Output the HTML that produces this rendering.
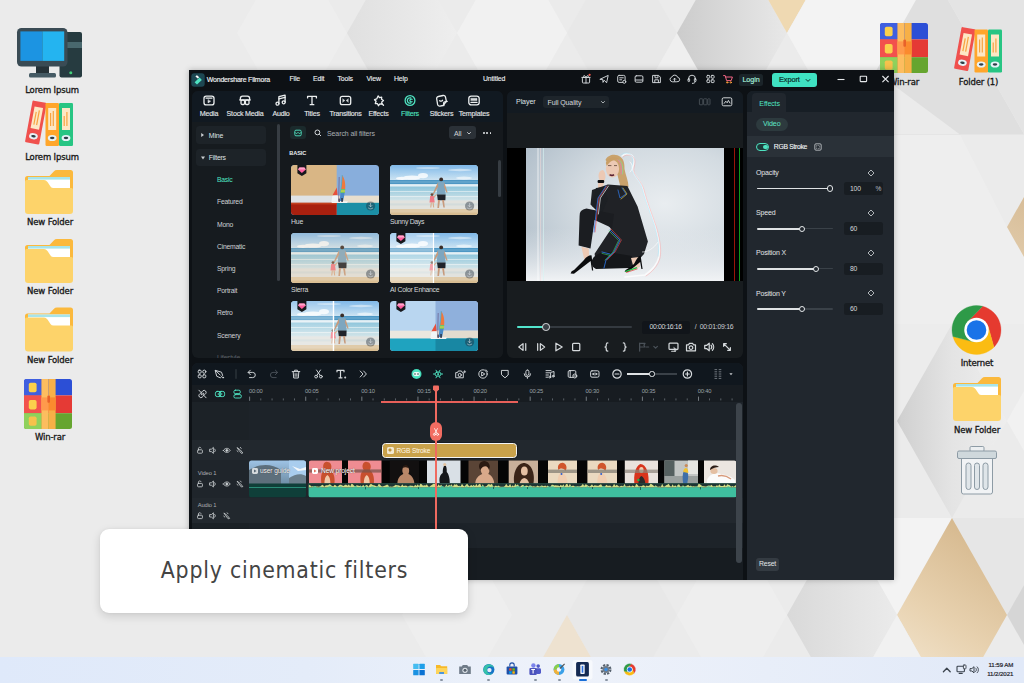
<!DOCTYPE html>
<html lang="en">
<head>
<meta charset="utf-8">
<title>Apply cinematic filters</title>
<style>
*{box-sizing:border-box;margin:0;padding:0}
html,body{width:1024px;height:683px;overflow:hidden;background:#ebebeb}
body{font-family:"Liberation Sans","DejaVu Sans",sans-serif;position:relative}
#stage{position:absolute;left:0;top:0;width:1024px;height:683px;overflow:hidden}
.abs{position:absolute}
.t{position:absolute;white-space:nowrap;line-height:1;color:#d9dde0;font-size:7px;letter-spacing:-0.1px}
.lbl{position:absolute;white-space:nowrap;line-height:1;color:#161616;font-family:"DejaVu Sans","Liberation Sans",sans-serif;font-size:8.5px;font-weight:normal;transform:translateX(-50%);-webkit-text-stroke:0.3px #161616;letter-spacing:-0.15px}
svg{position:absolute;overflow:visible}
.ic{stroke:#d5d9dc;fill:none;stroke-width:1.1;stroke-linecap:round;stroke-linejoin:round}
.teal{color:#4fe3c1}
</style>
</head>
<body>
<div id="stage">
<svg id="bg" width="1024" height="683" viewBox="0 0 1024 683" style="position:absolute;left:0;top:0">
<defs>
<linearGradient id="gd" x1="0" x2="1" y1="0" y2="0"><stop offset="0" stop-color="#cccccc"/><stop offset="1" stop-color="#e8e8e8"/></linearGradient>
<linearGradient id="gd3" x1="0" x2="1" y1="0" y2="0"><stop offset="0" stop-color="#cfcfcf"/><stop offset="0.5" stop-color="#e4e4e4"/><stop offset="1" stop-color="#eeeeee"/></linearGradient>
<linearGradient id="gd2" x1="0" x2="1" y1="0" y2="0"><stop offset="0" stop-color="#d9d9d9"/><stop offset="1" stop-color="#ebebeb"/></linearGradient>
<linearGradient id="gold" x1="0.65" x2="0.3" y1="0.05" y2="0.95"><stop offset="0" stop-color="#d6b98f"/><stop offset="0.55" stop-color="#e8d2b0"/><stop offset="1" stop-color="#f3e6d0"/></linearGradient>
<linearGradient id="gold2" x1="0.3" x2="0" y1="0" y2="1"><stop offset="0" stop-color="#cdae84"/><stop offset="1" stop-color="#ead8bc"/></linearGradient>
<linearGradient id="gl" x1="0" x2="1" y1="0" y2="0"><stop offset="0" stop-color="#e0e0e0"/><stop offset="1" stop-color="#eeeeee"/></linearGradient>
</defs>
<rect width="1024" height="683" fill="#ebebeb"/>
<polygon points="237,33 292,-64 347,33 292,130" fill="#eeeeee" />
<polygon points="347,33 402,-64 457,33 402,130" fill="url(#gl)" />
<polygon points="457,33 512,-64 567,33 512,130" fill="#f1f1f1" />
<polygon points="567,33 622,-64 677,33 622,130" fill="#e8e8e8" />
<polygon points="677,33 622,130 732,130" fill="#efefef"/>
<polygon points="677,33 732,-64 787,33 732,130" fill="url(#gd)" />
<polygon points="787,33 732,-64 842,-64" fill="#efd9b2"/>
<polygon points="787,33 842,-64 897,33 842,130" fill="#f3f3f3" />
<polygon points="842,0 916,0 840,135 820,135" fill="#f3f3f3"/>
<polygon points="916,0 948,0 1024,134 1024,135 840,135" fill="#dfdfdf"/>
<polygon points="948,0 1024,0 1024,134" fill="#e4e4e4"/>
<polygon points="880,75 960,134.5 880,134.5" fill="#ebebeb"/>
<rect x="880" y="135" width="144" height="189" fill="#eeeeee"/>
<polygon points="960,134.5 1024,134.5 1024,200 1007,227" fill="#ebebeb"/>
<polygon points="1007,227 1062,130 1117,227 1062,324" fill="url(#gold2)" />
<polygon points="893,324 1024,324 1024,421 893,421" fill="#ececec"/>
<polygon points="897,421 952,324 1007,421 952,518" fill="url(#gd3)" />
<polygon points="1007,421 1062,324 1117,421 1062,518" fill="#f1f1f1" />
<polygon points="842,518 952,518 897,615" fill="#f3f3f3"/>
<polygon points="952,518 1062,518 1007,615" fill="#e6e6e6"/>
<polygon points="897,615 952,518 1007,615 952,712" fill="url(#gold)" />
<polygon points="1007,615 1062,518 1117,615 1062,712" fill="#d6d6d6" />
<polygon points="787,615 842,518 897,615 842,712" fill="url(#gd2)" />
<polygon points="897,615 842,712 952,712" fill="#f1f1f1"/>
<polygon points="677,615 732,518 787,615 732,712" fill="#eeeeee" />
<polygon points="567,615 622,518 677,615 622,712" fill="#e8e8e8" />
<polygon points="567,615 512,712 622,712" fill="#eee2d0"/>
<polygon points="402,615 457,518 512,615 457,712" fill="#eeeeee" />
</svg>
<svg width="1024" height="683" viewBox="0 0 1024 683" style="left:0;top:0"><g transform="translate(17,28)"><rect x="42.5" y="4" width="22.5" height="45.5" rx="2" fill="#263b40"/><rect x="42.5" y="14" width="22.5" height="6" fill="#49686e"/><circle cx="53.8" cy="44.8" r="1.5" fill="#43d17a"/><rect x="19" y="36" width="13" height="10" fill="#263238"/><rect x="12" y="45" width="27" height="4.5" rx="1.5" fill="#455a64"/><rect x="0" y="0" width="50.5" height="38.5" rx="4.5" fill="#3a4b54"/><rect x="3.4" y="3.4" width="22" height="29.5" fill="#1c94e2"/><rect x="25.4" y="3.4" width="21.8" height="29.5" fill="#24b4f0"/></g><g transform="translate(25,101)"><g transform="rotate(10.5 11 22)"><rect x="3.6" y="0.4" width="14.4" height="42.4" rx="1.2" fill="#f0504d"/><rect x="6.6" y="6" width="8.6" height="22" fill="#fde7c5"/><rect x="8.6" y="11" width="1.2" height="13" fill="#f7a440"/><rect x="11.4" y="9" width="1.2" height="15" fill="#f7a440"/><ellipse cx="10.9" cy="35.5" rx="4.4" ry="3.1" fill="#e6f2f7"/><ellipse cx="10.9" cy="35.5" rx="2.3" ry="1.15" fill="#2f3e46"/></g><rect x="20.5" y="2" width="13.5" height="43" rx="1.2" fill="#ffa62b"/><rect x="23.2" y="7" width="8" height="22" fill="#fde7c5"/><rect x="25" y="12" width="1.2" height="13" fill="#f7a440"/><rect x="27.7" y="10" width="1.2" height="15" fill="#f7a440"/><ellipse cx="27.2" cy="37" rx="4.4" ry="3.1" fill="#e6f2f7"/><ellipse cx="27.2" cy="37" rx="2.3" ry="1.15" fill="#2f3e46"/><rect x="34" y="2" width="14" height="43" rx="1.2" fill="#27c583"/><rect x="37" y="7" width="8" height="22" fill="#fde7c5"/><rect x="38.6" y="15" width="1.2" height="10" fill="#f7a440"/><rect x="41.3" y="11" width="1.2" height="14" fill="#f7a440"/><ellipse cx="41" cy="37" rx="4.4" ry="3.1" fill="#e6f2f7"/><ellipse cx="41" cy="37" rx="2.3" ry="1.15" fill="#2f3e46"/></g><g transform="translate(25,170)"><path d="M2.5,6 H24.5 L29,1.2 Q30,0 32,0 H45.5 Q48,0 48,2.5 V40 H0 V8.5 Q0,6 2.5,6 Z" fill="#fbb93d"/><rect x="3" y="7" width="42" height="12" fill="#ffffff"/><rect x="3" y="7" width="42" height="2.6" fill="#a8e4ea"/><path d="M0,11.5 Q0,10 1.5,10 H19 Q21,10 22.5,12 L25.5,16.5 Q26.5,18 28.5,18 H46.5 Q48,18 48,19.5 V41 Q48,44 45,44 H3 Q0,44 0,41 Z" fill="#fdd36a"/></g><g transform="translate(25,239)"><path d="M2.5,6 H24.5 L29,1.2 Q30,0 32,0 H45.5 Q48,0 48,2.5 V40 H0 V8.5 Q0,6 2.5,6 Z" fill="#fbb93d"/><rect x="3" y="7" width="42" height="12" fill="#ffffff"/><rect x="3" y="7" width="42" height="2.6" fill="#a8e4ea"/><path d="M0,11.5 Q0,10 1.5,10 H19 Q21,10 22.5,12 L25.5,16.5 Q26.5,18 28.5,18 H46.5 Q48,18 48,19.5 V41 Q48,44 45,44 H3 Q0,44 0,41 Z" fill="#fdd36a"/></g><g transform="translate(25,307.5)"><path d="M2.5,6 H24.5 L29,1.2 Q30,0 32,0 H45.5 Q48,0 48,2.5 V40 H0 V8.5 Q0,6 2.5,6 Z" fill="#fbb93d"/><rect x="3" y="7" width="42" height="12" fill="#ffffff"/><rect x="3" y="7" width="42" height="2.6" fill="#a8e4ea"/><path d="M0,11.5 Q0,10 1.5,10 H19 Q21,10 22.5,12 L25.5,16.5 Q26.5,18 28.5,18 H46.5 Q48,18 48,19.5 V41 Q48,44 45,44 H3 Q0,44 0,41 Z" fill="#fdd36a"/></g><g transform="translate(24,379)"><clipPath id="wr24"><rect x="0" y="0" width="48" height="50" rx="2.5"/></clipPath><g clip-path="url(#wr24)"><rect x="0" y="0" width="48" height="16.4" fill="#2c4fd6"/><rect x="0" y="16.4" width="48" height="17.8" fill="#e53a35"/><rect x="0" y="34.2" width="48" height="15.8" fill="#66a52f"/><rect x="0" y="0" width="17.4" height="16.4" fill="#3f5fe0"/><rect x="0" y="16.4" width="17.4" height="17.8" fill="#f2514d"/><rect x="0" y="34.2" width="17.4" height="15.8" fill="#8fd15c"/><rect x="17.4" y="0" width="7.2" height="50" fill="#fdbd5f"/><rect x="24.6" y="0" width="7" height="50" fill="#f7b047"/><rect x="17.4" y="18.4" width="7.2" height="13" fill="#ff9a4c"/><rect x="24.6" y="18.4" width="7" height="13" fill="#fb8a2e"/><rect x="23.4" y="16.4" width="2.6" height="7.4" rx="1" fill="#e8622a"/><rect x="4.8" y="3.8" width="7.8" height="9.4" rx="1.8" fill="#fbd04c"/><rect x="4.8" y="21" width="7.8" height="9.4" rx="1.8" fill="#fbd04c"/><rect x="4.8" y="37.4" width="7.8" height="9.4" rx="1.8" fill="#f6c24c"/></g></g><g transform="translate(880,23)"><clipPath id="wr880"><rect x="0" y="0" width="48" height="50" rx="2.5"/></clipPath><g clip-path="url(#wr880)"><rect x="0" y="0" width="48" height="16.4" fill="#2c4fd6"/><rect x="0" y="16.4" width="48" height="17.8" fill="#e53a35"/><rect x="0" y="34.2" width="48" height="15.8" fill="#66a52f"/><rect x="0" y="0" width="17.4" height="16.4" fill="#3f5fe0"/><rect x="0" y="16.4" width="17.4" height="17.8" fill="#f2514d"/><rect x="0" y="34.2" width="17.4" height="15.8" fill="#8fd15c"/><rect x="17.4" y="0" width="7.2" height="50" fill="#fdbd5f"/><rect x="24.6" y="0" width="7" height="50" fill="#f7b047"/><rect x="17.4" y="18.4" width="7.2" height="13" fill="#ff9a4c"/><rect x="24.6" y="18.4" width="7" height="13" fill="#fb8a2e"/><rect x="23.4" y="16.4" width="2.6" height="7.4" rx="1" fill="#e8622a"/><rect x="4.8" y="3.8" width="7.8" height="9.4" rx="1.8" fill="#fbd04c"/><rect x="4.8" y="21" width="7.8" height="9.4" rx="1.8" fill="#fbd04c"/><rect x="4.8" y="37.4" width="7.8" height="9.4" rx="1.8" fill="#f6c24c"/></g></g><g transform="translate(954,27.5)"><g transform="rotate(10.5 11 22)"><rect x="3.6" y="0.4" width="14.4" height="42.4" rx="1.2" fill="#f0504d"/><rect x="6.6" y="6" width="8.6" height="22" fill="#fde7c5"/><rect x="8.6" y="11" width="1.2" height="13" fill="#f7a440"/><rect x="11.4" y="9" width="1.2" height="15" fill="#f7a440"/><ellipse cx="10.9" cy="35.5" rx="4.4" ry="3.1" fill="#e6f2f7"/><ellipse cx="10.9" cy="35.5" rx="2.3" ry="1.15" fill="#2f3e46"/></g><rect x="20.5" y="2" width="13.5" height="43" rx="1.2" fill="#ffa62b"/><rect x="23.2" y="7" width="8" height="22" fill="#fde7c5"/><rect x="25" y="12" width="1.2" height="13" fill="#f7a440"/><rect x="27.7" y="10" width="1.2" height="15" fill="#f7a440"/><ellipse cx="27.2" cy="37" rx="4.4" ry="3.1" fill="#e6f2f7"/><ellipse cx="27.2" cy="37" rx="2.3" ry="1.15" fill="#2f3e46"/><rect x="34" y="2" width="14" height="43" rx="1.2" fill="#27c583"/><rect x="37" y="7" width="8" height="22" fill="#fde7c5"/><rect x="38.6" y="15" width="1.2" height="10" fill="#f7a440"/><rect x="41.3" y="11" width="1.2" height="14" fill="#f7a440"/><ellipse cx="41" cy="37" rx="4.4" ry="3.1" fill="#e6f2f7"/><ellipse cx="41" cy="37" rx="2.3" ry="1.15" fill="#2f3e46"/></g><path d="M967.76,321.41 L982.63,306.28 A24.5,24.5 0 0 1 993.97,347.17 L988.30,326.73 L976.5,330 Z" fill="#e53a2f" stroke="#e53a2f" stroke-width="0.3"/><path d="M988.30,326.73 L993.97,347.17 A24.5,24.5 0 0 1 952.89,336.55 L973.43,341.86 L976.5,330 Z" fill="#fbbc12" stroke="#fbbc12" stroke-width="0.3"/><path d="M973.43,341.86 L952.89,336.55 A24.5,24.5 0 0 1 982.63,306.28 L967.76,321.41 L976.5,330 Z" fill="#2e9a48" stroke="#2e9a48" stroke-width="0.3"/><circle cx="976.5" cy="330" r="12.25" fill="#ffffff"/><circle cx="976.5" cy="330" r="9.80" fill="#1a73e8"/><g transform="translate(953,377)"><path d="M2.5,6 H24.5 L29,1.2 Q30,0 32,0 H45.5 Q48,0 48,2.5 V40 H0 V8.5 Q0,6 2.5,6 Z" fill="#fbb93d"/><rect x="3" y="7" width="42" height="12" fill="#ffffff"/><rect x="3" y="7" width="42" height="2.6" fill="#a8e4ea"/><path d="M0,11.5 Q0,10 1.5,10 H19 Q21,10 22.5,12 L25.5,16.5 Q26.5,18 28.5,18 H46.5 Q48,18 48,19.5 V41 Q48,44 45,44 H3 Q0,44 0,41 Z" fill="#fdd36a"/></g><g transform="translate(957,446)" stroke="#8d9ba5" stroke-width="1" ><rect x="13" y="0.5" width="14" height="5" rx="1.2" fill="#eceff1"/><rect x="4.5" y="11" width="31" height="37" rx="2" fill="#f1f3f5"/><rect x="0.5" y="5" width="39" height="7.5" rx="1.5" fill="#cfd8dc"/><rect x="9" y="17" width="5" height="26.5" rx="2.5" fill="#dfe5e9"/><rect x="17.5" y="17" width="5" height="26.5" rx="2.5" fill="#dfe5e9"/><rect x="26" y="17" width="5" height="26.5" rx="2.5" fill="#dfe5e9"/></g></svg>
<div class="lbl" style="left:52px;top:86.2px">Lorem Ipsum</div>
<div class="lbl" style="left:52px;top:153.2px">Lorem Ipsum</div>
<div class="lbl" style="left:50px;top:218.2px">New Folder</div>
<div class="lbl" style="left:50px;top:287.2px">New Folder</div>
<div class="lbl" style="left:50px;top:356.2px">New Folder</div>
<div class="lbl" style="left:50px;top:433.2px">Win-rar</div>
<div class="lbl" style="left:904px;top:78.2px">Win-rar</div>
<div class="lbl" style="left:978.5px;top:78.2px">Folder (1)</div>
<div class="lbl" style="left:977px;top:359.2px">Internet</div>
<div class="lbl" style="left:977px;top:426.2px">New Folder</div>
<div class="abs" style="left:189px;top:70px;width:705px;height:510px;background:#0d1115;box-shadow:0 0 6px rgba(0,0,0,.25)"></div>
<svg width="14" height="14" viewBox="0 0 14 14" style="left:191px;top:72.5px"><rect x="0.3" y="0.3" width="13.4" height="13.4" rx="3" fill="#1d4752"/><path d="M4.4,3.2 6,2.2 8.2,4.2 6.6,5.4Z" fill="#fff"/><path d="M8.6,4.6 10.8,7 6,11.6 3.6,9.2Z" fill="#4fe3c1"/></svg>
<div class="t" style="left:206.8px;top:76.4px;font-size:7px;color:#f0f2f3;letter-spacing:-0.21px;-webkit-text-stroke:0.15px #f0f2f3">Wondershare Filmora</div>
<div class="t" style="left:289.5px;top:76.4px;font-size:6.9px;color:#eceff0;letter-spacing:-0.15px;-webkit-text-stroke:0.12px #eceff0">File</div>
<div class="t" style="left:313px;top:76.4px;font-size:6.9px;color:#eceff0;letter-spacing:-0.15px;-webkit-text-stroke:0.12px #eceff0">Edit</div>
<div class="t" style="left:337.5px;top:76.4px;font-size:6.9px;color:#eceff0;letter-spacing:-0.15px;-webkit-text-stroke:0.12px #eceff0">Tools</div>
<div class="t" style="left:366.5px;top:76.4px;font-size:6.9px;color:#eceff0;letter-spacing:-0.15px;-webkit-text-stroke:0.12px #eceff0">View</div>
<div class="t" style="left:394px;top:76.4px;font-size:6.9px;color:#eceff0;letter-spacing:-0.15px;-webkit-text-stroke:0.12px #eceff0">Help</div>
<div class="t" style="left:483px;top:76.4px;font-size:6.9px;color:#eceff0;letter-spacing:-0.15px;-webkit-text-stroke:0.12px #eceff0">Untitled</div>
<svg class="ic" width="1024" height="683" viewBox="0 0 1024 683" style="left:0;top:0;stroke-width:0.95"><g transform="translate(586,79)"><rect x="-3.6" y="-1.6" width="7.2" height="5.6" rx="0.8"/><path d="M-4.2,-1.6h8.4M0,-1.6v5.6M0,-1.8c-1.5,-3 -3.6,-1.4 -1.8,0M0,-1.8c1.5,-3 3.6,-1.4 1.8,0"/><circle cx="3.6" cy="-4.2" r="1.1" fill="#ff5a4f" stroke="none"/></g><g transform="translate(604.2,79)"><path d="M-4,0.2 4,-3.6 2.4,3.8 0,1.2 -1.2,3.4 -1.4,0.8Z"/></g><g transform="translate(621.5,79)"><rect x="-3.8" y="-3.6" width="7.4" height="7" rx="1.4"/><path d="M-1.8,-1.2h3.6M-1.8,0.8h2"/><circle cx="2.8" cy="2.8" r="1.5" fill="#0d1115"/></g><g transform="translate(639,79)"><rect x="-3.9" y="-3.2" width="7.8" height="6.4" rx="1.2"/><path d="M-3.6,1h7.2"/></g><g transform="translate(656.6,79)"><path d="M-3.6,-3.6h5.6l1.8,1.8v5.4h-7.4Z"/><path d="M-1.6,-3.4v2.2h3v-2M-1.8,3.4v-2.6h3.6v2.6"/></g><g transform="translate(674.6,79)"><path d="M-2.4,2.8a2.4,2.4 0 0 1 -0.4,-4.7a3.1,3.1 0 0 1 5.9,0.3a2.2,2.2 0 0 1 -0.5,4.4Z"/><path d="M0,2v-2.6M-1.1,0.3l1.1,-1.1 1.1,1.1"/></g><g transform="translate(692,79)"><path d="M-3.4,0.8v-1.2a3.4,3.4 0 0 1 6.8,0v1.2"/><rect x="-4" y="-0.4" width="1.6" height="3" rx="0.7"/><rect x="2.4" y="-0.4" width="1.6" height="3" rx="0.7"/><path d="M3.2,2.6c0,1.4 -1.4,1.8 -2.8,1.8"/></g><g transform="translate(710.5,79)"><rect x="-3.6" y="-3.6" width="2.8" height="2.8" rx="0.7"/><rect x="0.8" y="-3.6" width="2.8" height="2.8" rx="0.7"/><rect x="-3.6" y="0.8" width="2.8" height="2.8" rx="0.7"/><rect x="0.8" y="0.8" width="2.8" height="2.8" rx="0.7"/></g><g transform="translate(728,79)" stroke="#ff5fa0"><path d="M-4.4,-3.4h1.6l1.4,5h4.6l1.2,-3.6h-6.6" stroke="#ff6a8a"/><circle cx="-0.8" cy="3.4" r="0.7" stroke="#ffa03c"/><circle cx="2.8" cy="3.4" r="0.7" stroke="#ffa03c"/></g></svg>
<div class="abs" style="left:739px;top:73.5px;width:24px;height:12.5px;background:#1b2429;border-radius:2.5px"></div>
<div class="t" style="left:751px;top:76.4px;transform:translateX(-50%);font-size:7.2px;color:#a6f0de;-webkit-text-stroke:0.15px #a6f0de">Login</div>
<div class="abs" style="left:772px;top:73px;width:45px;height:13.5px;background:#3fe2c2;border-radius:3px"></div>
<div class="t" style="left:779px;top:76.2px;font-size:7.4px;color:#0c2b27;-webkit-text-stroke:0.2px #0c2b27">Export</div>
<svg width="10" height="10" viewBox="-5 -5 10 10" style="left:803px;top:74.5px" fill="none" stroke="#0c2b27" stroke-width="1"><path d="M-2.2,-0.8 0,1.4 2.2,-0.8"/></svg>
<svg width="60" height="14" viewBox="0 0 60 14" style="left:834px;top:72px" fill="none" stroke="#e6e9eb" stroke-width="1.1"><path d="M3.5,7.5h7"/><rect x="26.2" y="4.2" width="6.4" height="5.4" rx="0.6"/><path d="M48.4,4 54.6,10.2M54.6,4 48.4,10.2"/></svg>
<div class="abs" style="left:192px;top:91px;width:311px;height:267px;background:#161b1f;border-radius:6px;overflow:hidden"><div class="abs" style="left:0;top:0;width:311px;height:30.5px;background:#111921"></div><div class="abs" style="left:88px;top:30.5px;width:223px;height:240px;background:#15191d"></div></div>
<div class="t" style="left:209px;top:110.7px;transform:translateX(-50%);font-size:7.1px;color:#e4e7e9;letter-spacing:-0.2px;-webkit-text-stroke:0.12px #e4e7e9">Media</div>
<div class="t" style="left:245px;top:110.7px;transform:translateX(-50%);font-size:7.1px;color:#e4e7e9;letter-spacing:-0.2px;-webkit-text-stroke:0.12px #e4e7e9">Stock Media</div>
<div class="t" style="left:281px;top:110.7px;transform:translateX(-50%);font-size:7.1px;color:#e4e7e9;letter-spacing:-0.2px;-webkit-text-stroke:0.12px #e4e7e9">Audio</div>
<div class="t" style="left:312px;top:110.7px;transform:translateX(-50%);font-size:7.1px;color:#e4e7e9;letter-spacing:-0.2px;-webkit-text-stroke:0.12px #e4e7e9">Titles</div>
<div class="t" style="left:345.5px;top:110.7px;transform:translateX(-50%);font-size:7.1px;color:#e4e7e9;letter-spacing:-0.2px;-webkit-text-stroke:0.12px #e4e7e9">Transitions</div>
<div class="t" style="left:378.5px;top:110.7px;transform:translateX(-50%);font-size:7.1px;color:#e4e7e9;letter-spacing:-0.2px;-webkit-text-stroke:0.12px #e4e7e9">Effects</div>
<div class="t" style="left:410px;top:110.7px;transform:translateX(-50%);font-size:7.1px;color:#4fe3c1;letter-spacing:-0.2px;-webkit-text-stroke:0.12px #4fe3c1">Filters</div>
<div class="t" style="left:441.5px;top:110.7px;transform:translateX(-50%);font-size:7.1px;color:#e4e7e9;letter-spacing:-0.2px;-webkit-text-stroke:0.12px #e4e7e9">Stickers</div>
<div class="t" style="left:474px;top:110.7px;transform:translateX(-50%);font-size:7.1px;color:#e4e7e9;letter-spacing:-0.2px;-webkit-text-stroke:0.12px #e4e7e9">Templates</div>
<svg class="ic" width="1024" height="683" viewBox="0 0 1024 683" style="left:0;top:0;stroke-width:1.3;stroke:#eceff0"><g transform="translate(209,100.5)"><rect x="-5" y="-4.4" width="10" height="8.8" rx="2.2"/><path d="M-3,-2.4h6"/><path d="M-1,-0.6v3l2.4,-1.5Z" fill="#d5d9dc" stroke-width="0.5"/></g><g transform="translate(245,100.5)"><path d="M-4.6,-0.4v-1.8a2.2,2.2 0 0 1 2.2,-2.2h4.8a2.2,2.2 0 0 1 2.2,2.2v1.8"/><path d="M-5.2,-0.6h10.4"/><rect x="-4" y="-0.4" width="3.6" height="4.4" rx="1.3"/><rect x="0.4" y="-0.4" width="3.6" height="4.4" rx="1.3"/></g><g transform="translate(281.3,100.3)"><path d="M-2.4,3.4v-7l6.2,-1.6v7"/><path d="M-2.4,-1.4 3.8,-3"/><circle cx="-3.8" cy="3.4" r="1.5"/><circle cx="2.4" cy="2" r="1.5"/></g><g transform="translate(312,100.5)" stroke-width="1.3"><path d="M-4.4,-2.6v-1.6h8.8v1.6M0,-4.2v8.4M-1.8,4.2h3.6"/></g><g transform="translate(345.5,100.5)"><rect x="-5.2" y="-4.2" width="10.4" height="8.4" rx="2"/><path d="M-2.6,-1.6 -0.6,0 -2.6,1.6Z M2.6,-1.6 0.6,0 2.6,1.6Z" fill="#d5d9dc" stroke-width="0.4"/></g><g transform="translate(378.5,100.5)"><path d="M-0.4,-4.6l1.4,1.8 2.2,-0.6 -0.2,2.2 2,1.2 -1.8,1.4 0.4,2.2 -2.2,-0.2 -1.4,1.8 -1,-2 -2.2,-0.2 0.8,-2.2 -1.6,-1.6 2.2,-0.8Z"/><path d="M3.4,3.2l1.6,1.6"/></g><g transform="translate(410,100.5)" stroke="#4fe3c1"><circle r="4.9"/><path d="M0.8,-2.6a2.7,2.7 0 1 0 0,5.2M2,-1.2a1.4,1.4 0 1 0 0,2.4"/></g><g transform="translate(441.5,100.5)"><path d="M-4.8,-1.6a2,2 0 0 1 1.6,-2.4l4.8,-1a2,2 0 0 1 2.4,1.6l0.9,4.2 -3.4,4.2 -3,0.6a2,2 0 0 1 -2.4,-1.6Z"/><path d="M5.7,0.8l-2.4,0.5a1.4,1.4 0 0 0 -1.1,1.7l0.2,2"/><path d="M-1.8,0.2a1.8,1.8 0 0 0 2.8,-0.4"/></g><g transform="translate(474,100.5)"><rect x="-5.2" y="-4.4" width="10.4" height="8.8" rx="2.4"/><rect x="-3" y="-2.2" width="6" height="2.2" fill="#d5d9dc" stroke-width="0.4"/><path d="M-3,1.9h6"/></g></svg>
<div class="abs" style="left:196px;top:126px;width:70px;height:18px;background:#1d2328;border-radius:3.5px"></div>
<div class="abs" style="left:196px;top:148.5px;width:70px;height:17.5px;background:#1d2328;border-radius:3.5px"></div>
<svg width="6" height="6" viewBox="0 0 6 6" style="left:199.5px;top:132px"><path d="M1.2,1 4,3 1.2,5Z" fill="#c9cdd0"/></svg>
<svg width="6" height="6" viewBox="0 0 6 6" style="left:199.5px;top:154.5px"><path d="M1,1.6 5,1.6 3,4.4Z" fill="#c9cdd0"/></svg>
<div class="t" style="left:208.8px;top:133.1px;font-size:6.9px;color:#dfe2e4">Mine</div>
<div class="t" style="left:208.8px;top:155.3px;font-size:6.9px;color:#dfe2e4;letter-spacing:-0.25px">Filters</div>
<div class="t" style="left:217px;top:177.1px;font-size:6.8px;color:#4fe3c1;letter-spacing:-0.22px">Basic</div>
<div class="t" style="left:217px;top:199.29999999999998px;font-size:6.8px;color:#cdd1d4;letter-spacing:-0.22px">Featured</div>
<div class="t" style="left:217px;top:221.5px;font-size:6.8px;color:#cdd1d4;letter-spacing:-0.22px">Mono</div>
<div class="t" style="left:217px;top:243.7px;font-size:6.8px;color:#cdd1d4;letter-spacing:-0.22px">Cinematic</div>
<div class="t" style="left:217px;top:265.90000000000003px;font-size:6.8px;color:#cdd1d4;letter-spacing:-0.22px">Spring</div>
<div class="t" style="left:217px;top:288.1px;font-size:6.8px;color:#cdd1d4;letter-spacing:-0.22px">Portrait</div>
<div class="t" style="left:217px;top:310.3px;font-size:6.8px;color:#cdd1d4;letter-spacing:-0.22px">Retro</div>
<div class="t" style="left:217px;top:332.5px;font-size:6.8px;color:#cdd1d4;letter-spacing:-0.22px">Scenery</div>
<div class="t" style="left:217px;top:354.70000000000005px;font-size:6.8px;color:#5a6065;letter-spacing:-0.22px">Lifestyle</div>
<div class="abs" style="left:276.5px;top:124px;width:3.2px;height:157px;background:#373d43;border-radius:2px"></div>
<div class="abs" style="left:192px;top:358px;width:311px;height:5px;background:#0d1115;"></div>
<div class="abs" style="left:290px;top:126px;width:16px;height:13.3px;background:#1b2a2c;border-radius:3px"></div>
<svg width="10" height="10" viewBox="-5 -5 10 10" style="left:293px;top:127.6px" fill="none" stroke="#4fe3c1" stroke-width="0.9"><rect x="-3.2" y="-2.8" width="6.4" height="5.6" rx="1.2"/><path d="M-3,-0.6c1,1.4 2,1.4 3,0c1,1.4 2,1.4 3,0"/></svg>
<svg width="10" height="10" viewBox="-5 -5 10 10" style="left:312.8px;top:127.8px" fill="none" stroke="#d5d9dc" stroke-width="1"><circle cx="-0.6" cy="-0.6" r="2.4"/><path d="M1.2,1.2 3,3"/></svg>
<div class="t" style="left:327px;top:130.1px;font-size:7px;color:#a9afb4;letter-spacing:-0.1px">Search all filters</div>
<div class="abs" style="left:448.5px;top:126.3px;width:27.5px;height:13px;background:#2b3137;border-radius:3px"></div>
<div class="t" style="left:454px;top:130px;font-size:7px;color:#d0d4d7">All</div>
<svg width="8" height="8" viewBox="-4 -4 8 8" style="left:465px;top:128.8px" fill="none" stroke="#d0d4d7" stroke-width="0.9"><path d="M-1.8,-0.8 0,1 1.8,-0.8"/></svg>
<div class="abs" style="left:483.2px;top:132.2px;width:1.6px;height:1.6px;background:#e6e9eb;border-radius:1px"></div>
<div class="abs" style="left:486.4px;top:132.2px;width:1.6px;height:1.6px;background:#e6e9eb;border-radius:1px"></div>
<div class="abs" style="left:489.59999999999997px;top:132.2px;width:1.6px;height:1.6px;background:#e6e9eb;border-radius:1px"></div>
<div class="t" style="left:289.3px;top:151.3px;font-size:5.6px;font-weight:bold;color:#e9ecee;letter-spacing:-0.1px">BASIC</div>
<div class="abs" style="left:497.5px;top:160px;width:3.6px;height:37px;background:#373d43;border-radius:2px"></div>
<div class="t" style="left:291px;top:219.2px;font-size:6.9px;color:#d5d9dc;letter-spacing:-0.2px">Hue</div>
<div class="t" style="left:390px;top:219.2px;font-size:6.9px;color:#d5d9dc;letter-spacing:-0.3px">Sunny Days</div>
<div class="t" style="left:291px;top:287px;font-size:6.9px;color:#d5d9dc;letter-spacing:-0.2px">Sierra</div>
<div class="t" style="left:390px;top:287px;font-size:6.9px;color:#d5d9dc;letter-spacing:-0.3px">AI Color Enhance</div>
<svg width="1024" height="683" viewBox="0 0 1024 683" style="left:0;top:0"><defs><linearGradient id="sky" x1="0" x2="0" y1="0" y2="1"><stop offset="0" stop-color="#7fb8e8"/><stop offset="1" stop-color="#cfe5f3"/></linearGradient>
<linearGradient id="sea" x1="0" x2="0" y1="0" y2="1"><stop offset="0" stop-color="#8fc6dc"/><stop offset="1" stop-color="#d2e4e8"/></linearGradient>
<clipPath id="tc"><rect width="88" height="50" rx="3.5"/></clipPath></defs><g transform="translate(291,165)"><g clip-path="url(#tc)"><rect width="88" height="50" fill="#88aedc"/><rect x="45.7" y="30.6" width="43" height="7.4" fill="#e8decd"/><rect x="45.7" y="37.8" width="43" height="12.2" fill="#1b8fa6"/><rect width="45.7" height="31" fill="#d9b685"/><rect y="30.6" width="45.7" height="7.4" fill="#dfe3e6"/><rect y="37.8" width="45.7" height="12.2" fill="#a8200f"/><rect y="37.8" width="45.7" height="1.6" fill="#c2401f"/><g transform="translate(0,0)"><path d="M51.2,10 C54.6,15 54.9,22 53.6,28 L49.4,28 C50.4,22 50.9,16 51.2,10Z" fill="#f0783c"/><path d="M51.2,10 C50.9,16 50.4,22 49.4,28" fill="none" stroke="#3ab0d8" stroke-width="0.7"/><path d="M50,24 L54.3,24 L53.6,28 L49.4,28Z" fill="#6cc46a"/><path d="M50.1,25.4 L54.1,25.4 L53.9,26.6 L49.8,26.6Z" fill="#f2d63a"/><path d="M49.4,28 L53.6,28 C53.2,31 52.6,34 52,36.2 L48.6,36.2 C49,33 49.2,30 49.4,28Z" fill="#4a8ac8"/><path d="M45.8,22.6 L41.4,30.6 L46.6,30.2Z" fill="#e8503a"/><path d="M41.4,30.6 L46.6,30.2 L47.6,36.2 L40.6,36.2Z" fill="#f2f6f8" opacity=".92"/><path d="M48.2,12 L47.6,37" stroke="#5a3a6a" stroke-width="0.5" fill="none"/><path d="M40,36.2 L57,36.2 L56,38 L41,38Z" fill="#f4f4f4"/><rect x="50.4" y="33" width="1.3" height="4" fill="#2a2a36"/><rect x="47.6" y="33.6" width="1.1" height="3.4" fill="#3a2a3a"/></g><path d="M6.4,0h9v8.2l-4.5,2.8 -4.5,-2.8Z" fill="#17181c"/><path d="M8.4,2.6h5l1.4,1.8 -3.9,3.6 -3.9,-3.6Z" fill="#ff5fa0"/><path d="M8.4,2.6h5l1.4,1.8h-7.8Z" fill="#ffa6ca"/><circle cx="79.6" cy="41" r="4.6" fill="#1e2a3a" opacity=".42"/><path d="M79.6,38v3.8M78,40.2l1.6,1.6 1.6,-1.6M77.2,42.8c0.8,1.4 4,1.4 4.8,0" fill="none" stroke="#d5dbe0" stroke-width="0.7" opacity=".85"/></g></g><g transform="translate(390,165)"><g clip-path="url(#tc)"><rect width="88" height="50" fill="#cfe3e8"/><rect width="88" height="15.4" fill="url(#sky)"/><g fill="#ffffff" opacity=".8"><ellipse cx="22" cy="12.6" rx="9" ry="2.2"/><ellipse cx="33" cy="10.6" rx="5" ry="2.6"/><ellipse cx="12" cy="13.4" rx="6" ry="1.6"/><ellipse cx="70" cy="5" rx="12" ry="1.2" opacity=".6"/><ellipse cx="74" cy="13" rx="8" ry="1.4" opacity=".7"/><ellipse cx="38" cy="3" rx="12" ry="1" opacity=".5"/></g><rect y="15" width="88" height="4.4" fill="#4d97c4"/><rect y="16.6" width="88" height="0.8" fill="#7db6d6"/><rect y="19.2" width="88" height="2.4" fill="#e3eff5"/><rect y="21.6" width="88" height="14" fill="url(#sea)"/><rect y="26" width="88" height="1" fill="#e6f1f4" opacity=".7"/><rect y="31" width="88" height="1.2" fill="#eef4f5" opacity=".7"/><rect y="35.4" width="88" height="9" fill="#e1e2de"/><rect y="38.4" width="88" height="2" fill="#cfd9da" opacity=".8"/><rect y="44" width="88" height="6" fill="#dfcaa8"/><rect y="47.6" width="88" height="2.4" fill="#d8bd92"/><g transform="translate(51.2,0)"><circle cx="0" cy="14.4" r="1.9" fill="#3a2c26"/><path d="M-3.4,16.8h6.6l1.2,12.8h-8.8Z" fill="#7ea6bf"/><path d="M-4.2,29.4h8.6l-0.2,5.8h-7.6Z" fill="#20232a"/><path d="M-3.2,35l-0.6,8h1.6l1,-8Z M0.8,35l1.4,7.6h1.4l-0.8,-7.6Z" fill="#c79a7c"/><path d="M-3.4,17.6l-5,11 1,0.6 4.4,-7.6Z" fill="#c79a7c"/><path d="M3.2,17.4l3.2,10 -1,0.4 -2.6,-6Z" fill="#c79a7c"/></g><g transform="translate(42,0)"><circle cx="0" cy="29.6" r="1.4" fill="#6a4a38"/><path d="M-1.8,31h3.6l0.9,6.6h-5.2Z" fill="#f07a86"/><path d="M-1.2,37.4l-0.6,5h1.1l0.6,-5Z M0.4,37.4l0.8,5h1l-0.5,-5Z" fill="#d8ab8c"/><path d="M1.6,31.4l2.8,-2.4 0.5,0.6 -2.6,3.4Z" fill="#d8ab8c"/></g><circle cx="79.6" cy="41" r="4.6" fill="#1e2a3a" opacity=".42"/><path d="M79.6,38v3.8M78,40.2l1.6,1.6 1.6,-1.6M77.2,42.8c0.8,1.4 4,1.4 4.8,0" fill="none" stroke="#d5dbe0" stroke-width="0.7" opacity=".85"/></g></g><g transform="translate(291,233)"><g clip-path="url(#tc)"><rect width="88" height="50" fill="#cfe3e8"/><rect width="88" height="15.4" fill="url(#sky)"/><g fill="#ffffff" opacity=".8"><ellipse cx="22" cy="12.6" rx="9" ry="2.2"/><ellipse cx="33" cy="10.6" rx="5" ry="2.6"/><ellipse cx="12" cy="13.4" rx="6" ry="1.6"/><ellipse cx="70" cy="5" rx="12" ry="1.2" opacity=".6"/><ellipse cx="74" cy="13" rx="8" ry="1.4" opacity=".7"/><ellipse cx="38" cy="3" rx="12" ry="1" opacity=".5"/></g><rect y="15" width="88" height="4.4" fill="#4d97c4"/><rect y="16.6" width="88" height="0.8" fill="#7db6d6"/><rect y="19.2" width="88" height="2.4" fill="#e3eff5"/><rect y="21.6" width="88" height="14" fill="url(#sea)"/><rect y="26" width="88" height="1" fill="#e6f1f4" opacity=".7"/><rect y="31" width="88" height="1.2" fill="#eef4f5" opacity=".7"/><rect y="35.4" width="88" height="9" fill="#e1e2de"/><rect y="38.4" width="88" height="2" fill="#cfd9da" opacity=".8"/><rect y="44" width="88" height="6" fill="#dfcaa8"/><rect y="47.6" width="88" height="2.4" fill="#d8bd92"/><g transform="translate(51.2,0)"><circle cx="0" cy="14.4" r="1.9" fill="#3a2c26"/><path d="M-3.4,16.8h6.6l1.2,12.8h-8.8Z" fill="#7ea6bf"/><path d="M-4.2,29.4h8.6l-0.2,5.8h-7.6Z" fill="#20232a"/><path d="M-3.2,35l-0.6,8h1.6l1,-8Z M0.8,35l1.4,7.6h1.4l-0.8,-7.6Z" fill="#c79a7c"/><path d="M-3.4,17.6l-5,11 1,0.6 4.4,-7.6Z" fill="#c79a7c"/><path d="M3.2,17.4l3.2,10 -1,0.4 -2.6,-6Z" fill="#c79a7c"/></g><g transform="translate(42,0)"><circle cx="0" cy="29.6" r="1.4" fill="#6a4a38"/><path d="M-1.8,31h3.6l0.9,6.6h-5.2Z" fill="#f07a86"/><path d="M-1.2,37.4l-0.6,5h1.1l0.6,-5Z M0.4,37.4l0.8,5h1l-0.5,-5Z" fill="#d8ab8c"/><path d="M1.6,31.4l2.8,-2.4 0.5,0.6 -2.6,3.4Z" fill="#d8ab8c"/></g><rect width="88" height="50" fill="#e8c9a0" opacity=".18"/><circle cx="79.6" cy="41" r="4.6" fill="#1e2a3a" opacity=".42"/><path d="M79.6,38v3.8M78,40.2l1.6,1.6 1.6,-1.6M77.2,42.8c0.8,1.4 4,1.4 4.8,0" fill="none" stroke="#d5dbe0" stroke-width="0.7" opacity=".85"/></g></g><g transform="translate(390,233)"><g clip-path="url(#tc)"><rect width="88" height="50" fill="#cfe3e8"/><rect width="88" height="15.4" fill="url(#sky)"/><g fill="#ffffff" opacity=".8"><ellipse cx="22" cy="12.6" rx="9" ry="2.2"/><ellipse cx="33" cy="10.6" rx="5" ry="2.6"/><ellipse cx="12" cy="13.4" rx="6" ry="1.6"/><ellipse cx="70" cy="5" rx="12" ry="1.2" opacity=".6"/><ellipse cx="74" cy="13" rx="8" ry="1.4" opacity=".7"/><ellipse cx="38" cy="3" rx="12" ry="1" opacity=".5"/></g><rect y="15" width="88" height="4.4" fill="#4d97c4"/><rect y="16.6" width="88" height="0.8" fill="#7db6d6"/><rect y="19.2" width="88" height="2.4" fill="#e3eff5"/><rect y="21.6" width="88" height="14" fill="url(#sea)"/><rect y="26" width="88" height="1" fill="#e6f1f4" opacity=".7"/><rect y="31" width="88" height="1.2" fill="#eef4f5" opacity=".7"/><rect y="35.4" width="88" height="9" fill="#e1e2de"/><rect y="38.4" width="88" height="2" fill="#cfd9da" opacity=".8"/><rect y="44" width="88" height="6" fill="#dfcaa8"/><rect y="47.6" width="88" height="2.4" fill="#d8bd92"/><g transform="translate(51.2,0)"><circle cx="0" cy="14.4" r="1.9" fill="#3a2c26"/><path d="M-3.4,16.8h6.6l1.2,12.8h-8.8Z" fill="#7ea6bf"/><path d="M-4.2,29.4h8.6l-0.2,5.8h-7.6Z" fill="#20232a"/><path d="M-3.2,35l-0.6,8h1.6l1,-8Z M0.8,35l1.4,7.6h1.4l-0.8,-7.6Z" fill="#c79a7c"/><path d="M-3.4,17.6l-5,11 1,0.6 4.4,-7.6Z" fill="#c79a7c"/><path d="M3.2,17.4l3.2,10 -1,0.4 -2.6,-6Z" fill="#c79a7c"/></g><g transform="translate(42,0)"><circle cx="0" cy="29.6" r="1.4" fill="#6a4a38"/><path d="M-1.8,31h3.6l0.9,6.6h-5.2Z" fill="#f07a86"/><path d="M-1.2,37.4l-0.6,5h1.1l0.6,-5Z M0.4,37.4l0.8,5h1l-0.5,-5Z" fill="#d8ab8c"/><path d="M1.6,31.4l2.8,-2.4 0.5,0.6 -2.6,3.4Z" fill="#d8ab8c"/></g><rect width="43.4" height="50" fill="#ffffff" opacity=".3"/><rect x="42.9" width="1.2" height="50" fill="#fff"/><path d="M6.4,0h9v8.2l-4.5,2.8 -4.5,-2.8Z" fill="#17181c"/><path d="M8.4,2.6h5l1.4,1.8 -3.9,3.6 -3.9,-3.6Z" fill="#ff5fa0"/><path d="M8.4,2.6h5l1.4,1.8h-7.8Z" fill="#ffa6ca"/><circle cx="79.6" cy="41" r="4.6" fill="#1e2a3a" opacity=".42"/><path d="M79.6,38v3.8M78,40.2l1.6,1.6 1.6,-1.6M77.2,42.8c0.8,1.4 4,1.4 4.8,0" fill="none" stroke="#d5dbe0" stroke-width="0.7" opacity=".85"/></g></g><g transform="translate(291,301)"><g clip-path="url(#tc)"><rect width="88" height="50" fill="#cfe3e8"/><rect width="88" height="15.4" fill="url(#sky)"/><g fill="#ffffff" opacity=".8"><ellipse cx="22" cy="12.6" rx="9" ry="2.2"/><ellipse cx="33" cy="10.6" rx="5" ry="2.6"/><ellipse cx="12" cy="13.4" rx="6" ry="1.6"/><ellipse cx="70" cy="5" rx="12" ry="1.2" opacity=".6"/><ellipse cx="74" cy="13" rx="8" ry="1.4" opacity=".7"/><ellipse cx="38" cy="3" rx="12" ry="1" opacity=".5"/></g><rect y="15" width="88" height="4.4" fill="#4d97c4"/><rect y="16.6" width="88" height="0.8" fill="#7db6d6"/><rect y="19.2" width="88" height="2.4" fill="#e3eff5"/><rect y="21.6" width="88" height="14" fill="url(#sea)"/><rect y="26" width="88" height="1" fill="#e6f1f4" opacity=".7"/><rect y="31" width="88" height="1.2" fill="#eef4f5" opacity=".7"/><rect y="35.4" width="88" height="9" fill="#e1e2de"/><rect y="38.4" width="88" height="2" fill="#cfd9da" opacity=".8"/><rect y="44" width="88" height="6" fill="#dfcaa8"/><rect y="47.6" width="88" height="2.4" fill="#d8bd92"/><g transform="translate(51.2,0)"><circle cx="0" cy="14.4" r="1.9" fill="#3a2c26"/><path d="M-3.4,16.8h6.6l1.2,12.8h-8.8Z" fill="#7ea6bf"/><path d="M-4.2,29.4h8.6l-0.2,5.8h-7.6Z" fill="#20232a"/><path d="M-3.2,35l-0.6,8h1.6l1,-8Z M0.8,35l1.4,7.6h1.4l-0.8,-7.6Z" fill="#c79a7c"/><path d="M-3.4,17.6l-5,11 1,0.6 4.4,-7.6Z" fill="#c79a7c"/><path d="M3.2,17.4l3.2,10 -1,0.4 -2.6,-6Z" fill="#c79a7c"/></g><g transform="translate(42,0)"><circle cx="0" cy="29.6" r="1.4" fill="#6a4a38"/><path d="M-1.8,31h3.6l0.9,6.6h-5.2Z" fill="#f07a86"/><path d="M-1.2,37.4l-0.6,5h1.1l0.6,-5Z M0.4,37.4l0.8,5h1l-0.5,-5Z" fill="#d8ab8c"/><path d="M1.6,31.4l2.8,-2.4 0.5,0.6 -2.6,3.4Z" fill="#d8ab8c"/></g><rect width="42.4" height="50" fill="#ffffff" opacity=".22"/><rect x="41.8" width="1.4" height="50" fill="#fff"/><path d="M6.4,0h9v8.2l-4.5,2.8 -4.5,-2.8Z" fill="#17181c"/><path d="M8.4,2.6h5l1.4,1.8 -3.9,3.6 -3.9,-3.6Z" fill="#ff5fa0"/><path d="M8.4,2.6h5l1.4,1.8h-7.8Z" fill="#ffa6ca"/><circle cx="79.6" cy="41" r="4.6" fill="#1e2a3a" opacity=".42"/><path d="M79.6,38v3.8M78,40.2l1.6,1.6 1.6,-1.6M77.2,42.8c0.8,1.4 4,1.4 4.8,0" fill="none" stroke="#d5dbe0" stroke-width="0.7" opacity=".85"/></g></g><g transform="translate(390,301)"><g clip-path="url(#tc)"><rect width="88" height="50" fill="#b9d6f0"/><rect x="45.5" width="43" height="50" fill="#8fb0dc"/><rect y="29.7" width="88" height="8" fill="#ebe7df"/><rect x="45.5" y="29.7" width="43" height="8" fill="#e3dccf"/><rect y="37.5" width="88" height="12.5" fill="#1fa3bf"/><rect x="45.5" y="37.5" width="43" height="12.5" fill="#1887a3"/><g transform="translate(0,0)"><path d="M51.2,10 C54.6,15 54.9,22 53.6,28 L49.4,28 C50.4,22 50.9,16 51.2,10Z" fill="#f0783c"/><path d="M51.2,10 C50.9,16 50.4,22 49.4,28" fill="none" stroke="#3ab0d8" stroke-width="0.7"/><path d="M50,24 L54.3,24 L53.6,28 L49.4,28Z" fill="#6cc46a"/><path d="M50.1,25.4 L54.1,25.4 L53.9,26.6 L49.8,26.6Z" fill="#f2d63a"/><path d="M49.4,28 L53.6,28 C53.2,31 52.6,34 52,36.2 L48.6,36.2 C49,33 49.2,30 49.4,28Z" fill="#4a8ac8"/><path d="M45.8,22.6 L41.4,30.6 L46.6,30.2Z" fill="#e8503a"/><path d="M41.4,30.6 L46.6,30.2 L47.6,36.2 L40.6,36.2Z" fill="#f2f6f8" opacity=".92"/><path d="M48.2,12 L47.6,37" stroke="#5a3a6a" stroke-width="0.5" fill="none"/><path d="M40,36.2 L57,36.2 L56,38 L41,38Z" fill="#f4f4f4"/><rect x="50.4" y="33" width="1.3" height="4" fill="#2a2a36"/><rect x="47.6" y="33.6" width="1.1" height="3.4" fill="#3a2a3a"/></g><path d="M6.4,0h9v8.2l-4.5,2.8 -4.5,-2.8Z" fill="#17181c"/><path d="M8.4,2.6h5l1.4,1.8 -3.9,3.6 -3.9,-3.6Z" fill="#ff5fa0"/><path d="M8.4,2.6h5l1.4,1.8h-7.8Z" fill="#ffa6ca"/><circle cx="79.6" cy="41" r="4.6" fill="#1e2a3a" opacity=".42"/><path d="M79.6,38v3.8M78,40.2l1.6,1.6 1.6,-1.6M77.2,42.8c0.8,1.4 4,1.4 4.8,0" fill="none" stroke="#d5dbe0" stroke-width="0.7" opacity=".85"/></g></g></svg>
<div class="abs" style="left:507px;top:91px;width:236px;height:267px;background:#181c1f;border-radius:6px;overflow:hidden"><div class="abs" style="left:0;top:0;width:236px;height:21.5px;background:#131a21"></div></div>
<div class="t" style="left:516px;top:99.3px;font-size:7.1px;color:#dfe2e4">Player</div>
<div class="abs" style="left:543px;top:96px;width:66px;height:12px;background:#1e252b;border-radius:3px"></div>
<div class="t" style="left:547.5px;top:99.1px;font-size:7px;color:#d5d9dc;letter-spacing:-0.1px">Full Quality</div>
<svg width="8" height="8" viewBox="-4 -4 8 8" style="left:599px;top:98px" fill="none" stroke="#b9bec2" stroke-width="0.9"><path d="M-1.8,-0.8 0,1 1.8,-0.8"/></svg>
<svg width="40" height="12" viewBox="0 0 40 12" style="left:698px;top:95.5px" fill="none" stroke-width="0.9"><g stroke="#4a5158"><rect x="1.4" y="2.8" width="3.4" height="6" rx="0.6"/><rect x="5.6" y="2.8" width="3.4" height="6" rx="0.6"/><rect x="9.8" y="2.8" width="2.2" height="6" rx="0.6"/></g><g stroke="#e3e6e8"><rect x="24.2" y="1.8" width="9.6" height="8" rx="1.4"/><path d="M26,7.6l1.8,-2.4 1.4,1.6 1.2,-2.4 1.8,3"/></g></svg>
<div class="abs" style="left:507px;top:148px;width:236px;height:133px;background:#000;"></div>
<svg width="198" height="133" viewBox="0 0 198 133" style="left:526.3px;top:148px">
<defs><radialGradient id="vg" cx="0.70" cy="0.42" r="0.85"><stop offset="0" stop-color="#e9edf0"/><stop offset="0.5" stop-color="#d3dbe1"/><stop offset="1" stop-color="#aebcc8"/></radialGradient>
<linearGradient id="fl" x1="0" x2="0" y1="0" y2="1"><stop offset="0" stop-color="#e6eaee" stop-opacity="0"/><stop offset="1" stop-color="#f1f3f5"/></linearGradient></defs>
<rect width="198" height="133" fill="url(#vg)"/>
<rect y="80" width="198" height="53" fill="url(#fl)"/>
<rect x="11.6" width="0.8" height="133" fill="#fff" opacity=".85"/><rect x="14.4" width="0.6" height="133" fill="#f6dada" opacity=".8"/><rect x="17.2" width="0.7" height="133" fill="#d8f4f2" opacity=".85"/>
<!-- ghost outline -->
<g fill="none" stroke-linejoin="round" stroke-linecap="round">
<path d="M96,8c4,-4 12,-2 12,5c0,4 -2,6 -1,10c2,6 8,10 10,18c3,12 8,24 12,36c3,10 6,22 4,32c-2,8 -8,14 -14,18l-20,2" stroke="#ffffff" stroke-width="1.6" opacity=".75"/>
<path d="M97,9c4,-4 12,-2 12,5c0,4 -2,6 -1,10c2,6 8,10 10,18c3,12 8,24 12,36c3,10 6,22 4,32c-2,8 -8,14 -14,18" stroke="#ff9a9a" stroke-width="0.6" opacity=".7"/>
<path d="M95,7c4,-4 12,-2 12,5c0,4 -2,6 -1,10c2,6 8,10 10,18c3,12 8,24 12,36c3,10 6,22 4,32" stroke="#9ae6ff" stroke-width="0.6" opacity=".7"/>
<path d="M104,14c3,2 3,8 0,10" stroke="#fff" stroke-width="1" opacity=".7"/>
</g>
<!-- woman -->
<g>
<!-- hair back / ponytail -->
<path d="M79.5,12c2,-5 10,-7 15,-3c4,3 4,8 4,12c1,6 4,12 4,18l-8,0l-3,-12Z" fill="#c9a26c"/>
<!-- face -->
<ellipse cx="86.5" cy="20.8" rx="6.6" ry="8.8" fill="#ecc9b4"/>
<path d="M79.8,15c1,-5 8,-8 13,-4c-4,0 -9,2 -12,7Z" fill="#c99f66"/>
<path d="M82,17.6h3.4M88,17.6h3" stroke="#5a4436" stroke-width="0.8"/>
<path d="M83.6,26.6c1.6,1 3.2,1 4.4,0" stroke="#5a2030" stroke-width="1.6" fill="none"/>
<!-- hand -->
<path d="M72.8,30c-1,-4 1,-8 4,-8c2,1 3,5 2.6,8l-1,3l-4.6,0Z" fill="#ecc9b4"/>
<rect x="71.6" y="32" width="6.6" height="3" rx="1" fill="#0e0f11"/>
<path d="M72.2,35h5.6l-1,5 -5,1Z" fill="#ecc9b4"/>
<!-- jacket mass -->
<path d="M81.9,36.5L101.4,38L111.6,58.5L121.9,93.4L118,106L106,119L70,117L68.6,105.7L85,81L72.7,64.7L64.5,56.5L66,42L74.7,39Z" fill="#202226"/>
<path d="M70,40l8,-1 4,12 -6,14 -10,-7Z" fill="#1d2024"/>
<!-- thigh + shin left leg -->
<path d="M88,66L60.4,60.6Q53,62 53.6,68L52.6,97.5L64.5,100.5L68.6,72L86,80Z" fill="#1b1d21"/>
<!-- ankle skin -->
<path d="M55.4,98.8L62.8,100.4L63,109L58.4,112Z" fill="#ecc9b4"/>
<!-- left shoe -->
<path d="M65.6,107.4L67.2,122.4L66,122.4L64.6,113L48,125.8L44.6,125.4Q45,123 48,122L58,112Q62,107 65.6,107.4Z" fill="#0b0c0e"/>
<!-- right lower leg -->
<path d="M66,112Q70,104 82,104L106,108L104,120L70,121Q64,118 66,112Z" fill="#15171a"/>
<path d="M105,110L113,109L114,119L108,121Z" fill="#ecc9b4"/>
<path d="M114.6,107.6L116.6,121L115.4,121L114.2,114L102,124L98.6,123.8Q99,122 102,120.6L108,116Q112,108 114.6,107.6Z" fill="#0b0c0e"/>
<!-- RGB split strokes -->
<g fill="none" stroke-width="0.8" stroke-linecap="round" stroke-linejoin="round">
<path d="M80,38L72,50L70,66L68,84" stroke="#2f7cf0"/>
<path d="M81,38L73,50L71,66L69,84" stroke="#f04a4a" stroke-width="0.6"/>
<path d="M82.5,38L74.4,50L72.4,66" stroke="#f4f6f8" stroke-width="0.7"/>
<path d="M84,82L94,92L88,104L80,112L78,120" stroke="#2f7cf0"/>
<path d="M85,81L95.4,92L89,104L81,112" stroke="#f04a4a" stroke-width="0.6"/>
<path d="M83,83L92.6,92.4L87,104L79,112" stroke="#3fd06a" stroke-width="0.6"/>
<path d="M96,40L100,46L94,50L92,42" stroke="#2f7cf0" stroke-width="0.7"/>
<path d="M97,40L101,46L95,51" stroke="#f0d84a" stroke-width="0.6"/>
<path d="M76,104L84,106" stroke="#2f7cf0"/><path d="M76,105.4L84,107.4" stroke="#3fd06a" stroke-width="0.6"/>
<path d="M92,12c3,2 4,8 3,14" stroke="#f06ad0" stroke-width="0.6"/><path d="M93.4,12c3,2 4,8 3,14" stroke="#6af0a0" stroke-width="0.5"/>
</g>
<path d="M99.4,123.6L111,119.6" stroke="#25c246" stroke-width="1.5"/><path d="M100,124.6L111.6,120.8" stroke="#e03a3a" stroke-width="0.7"/>
<!-- ghost faint fill legs -->
<path d="M116,104c6,0 12,-4 16,-10" stroke="#fff" stroke-width="1" fill="none" opacity=".6"/>
</g>
</svg>
<div class="abs" style="left:733.7px;top:148px;width:1px;height:133px;background:#9a130a;"></div>
<div class="abs" style="left:738.8px;top:148px;width:1.7px;height:133px;background:#0f9a18;"></div>
<div class="abs" style="left:517px;top:326.1px;width:114.5px;height:2px;background:#343a40;border-radius:1px"></div>
<div class="abs" style="left:517px;top:325.9px;width:29px;height:2.4px;background:#52e5cc;border-radius:1.2px"></div>
<div class="abs" style="left:542.2px;top:323.3px;width:7.6px;height:7.6px;background:#3a4046;border-radius:50%;border:1.8px solid #dcdfe1"></div>
<div class="abs" style="left:641.5px;top:321px;width:48.2px;height:12.6px;background:#11151a;border-radius:2.5px"></div>
<div class="t" style="left:649.5px;top:324.4px;font-size:6.9px;color:#d5d9dc;letter-spacing:-0.38px">00:00:16:16</div>
<div class="t" style="left:694.8px;top:324.4px;font-size:6.9px;color:#c9cdd0;letter-spacing:-0.25px">/&nbsp; 00:01:09:16</div>
<svg class="ic" width="1024" height="683" viewBox="0 0 1024 683" style="left:0;top:0;stroke-width:1.1"><g transform="translate(522.6,347) scale(1.12)"><path d="M0.4,-3 -3.4,0 0.4,3Z"/><path d="M2.8,-3v6"/></g><g transform="translate(540.8,347) scale(1.12)"><path d="M-0.4,-3 3.4,0 -0.4,3Z"/><path d="M-2.8,-3v6"/></g><g transform="translate(558.6,347) scale(1.12)"><path d="M-2.4,-3.4 3.2,0 -2.4,3.4Z"/></g><g transform="translate(576.2,347) scale(1.12)"><rect x="-3.2" y="-3.2" width="6.4" height="6.4" rx="0.8"/></g><g transform="translate(606.5,347) scale(1.12)"><path d="M1.2,-3.6c-1.4,0 -1.4,0.6 -1.4,1.6c0,1 0,2 -1.2,2c1.2,0 1.2,1 1.2,2c0,1 0,1.6 1.4,1.6"/></g><g transform="translate(624.7,347) scale(1.12)"><path d="M-1.2,-3.6c1.4,0 1.4,0.6 1.4,1.6c0,1 0,2 1.2,2c-1.2,0 -1.2,1 -1.2,2c0,1 0,1.6 -1.4,1.6"/></g><g transform="translate(643,347) scale(1.12)" stroke="#4a5158"><path d="M-3,3.6v-7M-3,-3.2h4.8l-1,1.6 1,1.6h-4.8"/><path d="M3,0h2"/></g><g transform="translate(655.6,347) scale(1.12)" stroke="#4a5158"><path d="M-1.6,-0.6 0,1 1.6,-0.6"/></g><g transform="translate(673.5,347) scale(1.12)"><rect x="-4" y="-3.4" width="8" height="5.6" rx="0.8"/><path d="M-1.6,3.8h3.2"/><path d="M0.4,0.4l2.8,2.2 -1.4,0.2 -0.4,1.2Z" fill="#d5d9dc" stroke-width="0.4"/></g><g transform="translate(691,347) scale(1.12)"><path d="M-4,-2h1.8l0.8,-1.2h2.8l0.8,1.2h1.8v5.4h-8Z"/><circle cx="0" cy="0.6" r="1.6"/></g><g transform="translate(709,347) scale(1.12)"><path d="M-3.8,-1.4h1.6l2.4,-2v6.8l-2.4,-2h-1.6Z"/><path d="M1.8,-1.6a2.4,2.4 0 0 1 0,3.2M3,-3a4.4,4.4 0 0 1 0,6"/></g><g transform="translate(727,347) scale(1.12)"><path d="M-3,-3 3,3M-3,-0.6v-2.4h2.4M3,0.6v2.4h-2.4"/></g></svg>
<div class="abs" style="left:747px;top:91px;width:147px;height:489px;background:#21272e;border-radius:6px 0 0 0;overflow:hidden"><div class="abs" style="left:0;top:0;width:147px;height:21px;background:#171e25"></div></div>
<div class="abs" style="left:751.5px;top:92.8px;width:34.5px;height:19.4px;background:#21272e;border-radius:4px 4px 0 0"></div>
<div class="t" style="left:759.3px;top:100.6px;font-size:7.1px;color:#4fe3c1;letter-spacing:-0.15px">Effects</div>
<div class="abs" style="left:756px;top:117.6px;width:31.5px;height:13.4px;background:#2d3a3e;border-radius:7px"></div>
<div class="t" style="left:771.8px;top:121.4px;transform:translateX(-50%);font-size:7.1px;color:#5fe6c8">Video</div>
<div class="abs" style="left:747px;top:135.8px;width:147px;height:21px;background:#2a3138;"></div>
<div class="abs" style="left:756px;top:142.8px;width:13px;height:7.8px;background:#1e3a3a;border-radius:4px;border:1px solid #4fe3c1"></div>
<div class="abs" style="left:763.4px;top:144.6px;width:4.2px;height:4.2px;background:#4fe3c1;border-radius:50%"></div>
<div class="t" style="left:773.8px;top:144.2px;font-size:6.8px;color:#f2f4f5;letter-spacing:-0.3px;-webkit-text-stroke:0.12px #f2f4f5">RGB Stroke</div>
<svg width="10" height="10" viewBox="-5 -5 10 10" style="left:812.6px;top:141.6px" fill="none" stroke="#c9cdd0" stroke-width="0.8"><rect x="-3.2" y="-3.2" width="6.4" height="6.4" rx="1.2"/><rect x="-1.6" y="-1.6" width="3.2" height="3.2" stroke-dasharray="1 0.8" stroke-width="0.6"/></svg>
<div class="t" style="left:756px;top:169.1px;font-size:7px;color:#e3e6e8;letter-spacing:-0.15px">Opacity</div>
<svg width="10" height="10" viewBox="-5 -5 10 10" style="left:866px;top:167.6px" fill="none" stroke="#d5d9dc" stroke-width="0.8"><path d="M0,-3 3,0 0,3 -3,0Z"/></svg>
<div class="abs" style="left:757px;top:187.9px;width:76px;height:1.4px;background:#3a4148;border-radius:1px"></div>
<div class="abs" style="left:757px;top:187.7px;width:73px;height:1.8px;background:#dfe2e4;border-radius:1px"></div>
<div class="abs" style="left:826.8px;top:185.4px;width:6.4px;height:6.4px;background:#21272e;border-radius:50%;border:1.3px solid #e6e9eb"></div>
<div class="abs" style="left:843.7px;top:182.29999999999998px;width:39.5px;height:12.6px;background:#181d22;border-radius:2.5px"></div>
<div class="t" style="left:850px;top:185.79999999999998px;font-size:6.8px;color:#d5d9dc;letter-spacing:-0.2px">100</div>
<div class="t" style="left:875.5px;top:185.79999999999998px;font-size:6.6px;color:#b9bec2">%</div>
<div class="t" style="left:756px;top:209.2px;font-size:7px;color:#e3e6e8;letter-spacing:-0.15px">Speed</div>
<svg width="10" height="10" viewBox="-5 -5 10 10" style="left:866px;top:207.7px" fill="none" stroke="#d5d9dc" stroke-width="0.8"><path d="M0,-3 3,0 0,3 -3,0Z"/></svg>
<div class="abs" style="left:757px;top:228.0px;width:76px;height:1.4px;background:#3a4148;border-radius:1px"></div>
<div class="abs" style="left:757px;top:227.79999999999998px;width:45px;height:1.8px;background:#dfe2e4;border-radius:1px"></div>
<div class="abs" style="left:798.8px;top:225.5px;width:6.4px;height:6.4px;background:#21272e;border-radius:50%;border:1.3px solid #e6e9eb"></div>
<div class="abs" style="left:843.7px;top:222.39999999999998px;width:39.5px;height:12.6px;background:#181d22;border-radius:2.5px"></div>
<div class="t" style="left:850px;top:225.89999999999998px;font-size:6.8px;color:#d5d9dc;letter-spacing:-0.2px">60</div>
<div class="t" style="left:756px;top:249.3px;font-size:7px;color:#e3e6e8;letter-spacing:-0.15px">Position X</div>
<svg width="10" height="10" viewBox="-5 -5 10 10" style="left:866px;top:247.8px" fill="none" stroke="#d5d9dc" stroke-width="0.8"><path d="M0,-3 3,0 0,3 -3,0Z"/></svg>
<div class="abs" style="left:757px;top:268.1px;width:76px;height:1.4px;background:#3a4148;border-radius:1px"></div>
<div class="abs" style="left:757px;top:267.90000000000003px;width:59px;height:1.8px;background:#dfe2e4;border-radius:1px"></div>
<div class="abs" style="left:812.8px;top:265.6px;width:6.4px;height:6.4px;background:#21272e;border-radius:50%;border:1.3px solid #e6e9eb"></div>
<div class="abs" style="left:843.7px;top:262.5px;width:39.5px;height:12.6px;background:#181d22;border-radius:2.5px"></div>
<div class="t" style="left:850px;top:266.0px;font-size:6.8px;color:#d5d9dc;letter-spacing:-0.2px">80</div>
<div class="t" style="left:756px;top:289.5px;font-size:7px;color:#e3e6e8;letter-spacing:-0.15px">Position Y</div>
<svg width="10" height="10" viewBox="-5 -5 10 10" style="left:866px;top:288px" fill="none" stroke="#d5d9dc" stroke-width="0.8"><path d="M0,-3 3,0 0,3 -3,0Z"/></svg>
<div class="abs" style="left:757px;top:308.3px;width:76px;height:1.4px;background:#3a4148;border-radius:1px"></div>
<div class="abs" style="left:757px;top:308.1px;width:45px;height:1.8px;background:#dfe2e4;border-radius:1px"></div>
<div class="abs" style="left:798.8px;top:305.8px;width:6.4px;height:6.4px;background:#21272e;border-radius:50%;border:1.3px solid #e6e9eb"></div>
<div class="abs" style="left:843.7px;top:302.7px;width:39.5px;height:12.6px;background:#181d22;border-radius:2.5px"></div>
<div class="t" style="left:850px;top:306.2px;font-size:6.8px;color:#d5d9dc;letter-spacing:-0.2px">60</div>
<div class="abs" style="left:756px;top:557.5px;width:23px;height:13.5px;background:#343b42;border-radius:3px"></div>
<div class="t" style="left:767.5px;top:560.9px;transform:translateX(-50%);font-size:6.8px;color:#e3e6e8;letter-spacing:-0.15px">Reset</div>
<div class="abs" style="left:192px;top:363.4px;width:551px;height:217px;background:#1d2329;border-radius:6px 6px 0 0;overflow:hidden"><div class="abs" style="left:0;top:0;width:551px;height:21.4px;background:#10171e"></div><div class="abs" style="left:0;top:21.4px;width:551px;height:17px;background:#171c21"></div><div class="abs" style="left:0;top:38.4px;width:57px;height:180px;background:#1c2227"></div><div class="abs" style="left:0;top:76.6px;width:551px;height:20px;background:#22282e"></div><div class="abs" style="left:0;top:96.6px;width:551px;height:38.4px;background:#1f252b"></div><div class="abs" style="left:0;top:135px;width:551px;height:24.4px;background:#22282e"></div><div class="abs" style="left:0;top:185px;width:551px;height:33px;background:#171c21"></div></div>
<svg class="ic" width="1024" height="683" viewBox="0 0 1024 683" style="left:0;top:0;stroke-width:0.95"><g transform="translate(202,374)"><rect x="-3.8" y="-3.8" width="3" height="3" rx="1"/><circle cx="2.3" cy="-2.3" r="1.6"/><rect x="-3.8" y="0.8" width="3" height="3" rx="1"/><rect x="0.8" y="0.8" width="3" height="3" rx="1"/></g><g transform="translate(219.5,374)"><path d="M-4,-3.6l6,1.8 1.2,3.4 -2.4,2.2 -3.2,-1.4Z"/><path d="M-4,-3.6l4.8,4.8"/><circle cx="3.6" cy="3.6" r="0.5" fill="#d5d9dc"/></g><g transform="translate(236,374)" stroke="#3a4148"><path d="M0,-4.4v8.8"/></g><g transform="translate(251.7,374)"><path d="M-3.4,-1.6h4.4a2.6,2.6 0 0 1 0,5.2h-3.2"/><path d="M-1.4,-3.8l-2.2,2.2 2.2,2.2"/></g><g transform="translate(274,374)" stroke="#4a5158"><path d="M3.4,-1.6h-4.4a2.6,2.6 0 0 0 0,5.2h3.2"/><path d="M1.4,-3.8l2.2,2.2 -2.2,2.2"/></g><g transform="translate(296,374)"><path d="M-3.8,-2.4h7.6M-1.4,-2.6v-1.2h2.8v1.2M-2.8,-2.2l0.5,6.2h4.6l0.5,-6.2"/><path d="M-0.9,-0.4v2.8M0.9,-0.4v2.8"/></g><g transform="translate(318.5,374)"><circle cx="-2.4" cy="2.6" r="1.4"/><circle cx="2.4" cy="2.6" r="1.4"/><path d="M-1.6,1.4 2,-4M1.6,1.4 -2,-4"/></g><g transform="translate(341,374)" stroke-width="1.2"><path d="M-4,-2.2v-1.4h7v1.4M-0.5,-3.6v7.4M-2,3.8h3"/><circle cx="4.2" cy="3.6" r="0.4" fill="#d5d9dc"/></g><g transform="translate(363,374)"><path d="M-2.8,-3 0,0 -2.8,3M0.6,-3 3.4,0 0.6,3"/></g><g transform="translate(416.5,374)" stroke="none"><circle r="5" fill="#3fd6b4"/><circle r="4.2" fill="#4fe3c1"/><rect x="-3.4" y="-2" width="6.8" height="4" rx="1.9" fill="#eefcf8"/><circle cx="-1.5" cy="0" r="0.75" fill="#13332e"/><circle cx="1.5" cy="0" r="0.75" fill="#13332e"/></g><g transform="translate(438,374)" stroke="#4fe3c1"><rect x="-2.8" y="-1.8" width="5.6" height="3.8" rx="1.6"/><path d="M-2,-3.8l1,1.6M2,-3.8l-1,1.6M-2,3.8l1,-1.6M2,3.8l-1,-1.6M-4.6,0h1.6M3,0h1.6"/><circle cx="0" cy="0.1" r="0.5" fill="#4fe3c1"/></g><g transform="translate(460.5,374)"><path d="M-4.4,-1.4h1.4l0.8,-1.6h3.2l0.8,1.6h1v5.2h-7.2Z"/><circle cx="-0.8" cy="1" r="1.6"/><path d="M4.2,-3.6l0.4,1 1,0.4 -1,0.4 -0.4,1 -0.4,-1 -1,-0.4 1,-0.4Z" fill="#d5d9dc" stroke-width="0.3"/></g><g transform="translate(483,374)"><circle r="4.2"/><path d="M-1,-1.8 1.8,0 -1,1.8Z"/><path d="M3,-4.2a5,5 0 0 1 1.4,1.6" /></g><g transform="translate(505,374)"><path d="M-3.2,-3.6h6.4v4.6l-3.2,2.8 -3.2,-2.8Z"/></g><g transform="translate(527.4,374)"><rect x="-1.5" y="-4" width="3" height="5.4" rx="1.5"/><path d="M-3.2,-0.2a3.2,3.2 0 0 0 6.4,0M0,3v1.4"/></g><g transform="translate(550,374)"><path d="M-4,-3.4h5M-4,-1.2h3.6M-4,1h2.4M-4,3.2h2"/><path d="M0.6,3v-4.6l3.4,-0.9v4.6"/><circle cx="-0.2" cy="3.1" r="0.9"/><circle cx="3.2" cy="2.2" r="0.9"/></g><g transform="translate(572.4,374)"><rect x="-4.2" y="-3.4" width="7.6" height="6.8" rx="1.2"/><path d="M-2.2,-3.4v6.8"/><circle cx="2.4" cy="2" r="2" fill="#10171e"/><path d="M1.4,2h2"/></g><g transform="translate(594.8,374)"><rect x="-4.2" y="-3.2" width="8.4" height="6.4" rx="1.4"/><path d="M-2,0h4M-2,0l1,-1M-2,0l1,1M2,0l-1,-1M2,0l-1,1"/></g><g transform="translate(617,374)" stroke-width="1.2"><circle r="4.2"/><path d="M-1.9,0h3.8"/></g><g transform="translate(687.4,374)" stroke-width="1.2"><circle r="4.2"/><path d="M-1.9,0h3.8M0,-1.9v3.8"/></g><g transform="translate(717.9,374)" stroke="none" fill="#6f767d"><rect x="-3.4" y="-4.9" width="2.6" height="1"/><rect x="0.8" y="-4.9" width="2.6" height="1"/><rect x="-3.4" y="-2.7" width="2.6" height="1"/><rect x="0.8" y="-2.7" width="2.6" height="1"/><rect x="-3.4" y="-0.5" width="2.6" height="1"/><rect x="0.8" y="-0.5" width="2.6" height="1"/><rect x="-3.4" y="1.7000000000000002" width="2.6" height="1"/><rect x="0.8" y="1.7000000000000002" width="2.6" height="1"/><rect x="-3.4" y="3.9000000000000004" width="2.6" height="1"/><rect x="0.8" y="3.9000000000000004" width="2.6" height="1"/></g><g transform="translate(731,374)" stroke="none"><path d="M-1.6,-0.8h3.2l-1.6,2Z" fill="#c9cdd0"/></g><g transform="translate(202.5,394)"><path d="M-1,1a2,2 0 0 1 0,-2.8l1.4,-1.4a2,2 0 0 1 2.8,2.8l-0.7,0.7M1,-1a2,2 0 0 1 0,2.8l-1.4,1.4a2,2 0 0 1 -2.8,-2.8l0.7,-0.7"/><path d="M-3.6,-3.8l7.2,7.6"/></g><g transform="translate(220,394)" stroke="#4fe3c1"><rect x="-4.6" y="-2.6" width="5.4" height="5.2" rx="1.8"/><rect x="-0.8" y="-2.6" width="5.4" height="5.2" rx="1.8"/><path d="M-2,0h4"/></g><g transform="translate(237.5,394)" stroke="#4fe3c1"><rect x="-3.6" y="-3.8" width="6.4" height="3.4" rx="1.4"/><rect x="-3.6" y="0.6" width="7.4" height="3.4" rx="1.4"/></g></svg>
<div class="abs" style="left:627px;top:373.4px;width:50px;height:1.2px;background:#3a4148;"></div>
<div class="abs" style="left:627px;top:373.3px;width:25px;height:1.4px;background:#dfe2e4;"></div>
<div class="abs" style="left:649.4px;top:371.4px;width:5.2px;height:5.2px;background:#10171e;border-radius:50%;border:1.2px solid #e6e9eb"></div>
<div class="t" style="left:249.0px;top:389.1px;font-size:5.8px;color:#9aa1a7;letter-spacing:-0.2px">00:00</div>
<div class="t" style="left:305.1px;top:389.1px;font-size:5.8px;color:#9aa1a7;letter-spacing:-0.2px">00:05</div>
<div class="t" style="left:361.2px;top:389.1px;font-size:5.8px;color:#9aa1a7;letter-spacing:-0.2px">00:10</div>
<div class="t" style="left:417.3px;top:389.1px;font-size:5.8px;color:#9aa1a7;letter-spacing:-0.2px">00:15</div>
<div class="t" style="left:473.40000000000003px;top:389.1px;font-size:5.8px;color:#9aa1a7;letter-spacing:-0.2px">00:20</div>
<div class="t" style="left:529.5px;top:389.1px;font-size:5.8px;color:#9aa1a7;letter-spacing:-0.2px">00:25</div>
<div class="t" style="left:585.5999999999999px;top:389.1px;font-size:5.8px;color:#9aa1a7;letter-spacing:-0.2px">00:30</div>
<div class="t" style="left:641.6999999999999px;top:389.1px;font-size:5.8px;color:#9aa1a7;letter-spacing:-0.2px">00:35</div>
<div class="t" style="left:697.8px;top:389.1px;font-size:5.8px;color:#9aa1a7;letter-spacing:-0.2px">00:40</div>
<svg width="1024" height="683" viewBox="0 0 1024 683" style="left:0;top:0"><rect x="249.20" y="396.6" width="0.9" height="4.2" fill="#7f868c"/><rect x="260.42" y="398.4" width="0.8" height="2" fill="#6a7178"/><rect x="271.64" y="398.4" width="0.8" height="2" fill="#6a7178"/><rect x="282.86" y="398.4" width="0.8" height="2" fill="#6a7178"/><rect x="294.08" y="398.4" width="0.8" height="2" fill="#6a7178"/><rect x="305.30" y="396.6" width="0.9" height="4.2" fill="#7f868c"/><rect x="316.52" y="398.4" width="0.8" height="2" fill="#6a7178"/><rect x="327.74" y="398.4" width="0.8" height="2" fill="#6a7178"/><rect x="338.96" y="398.4" width="0.8" height="2" fill="#6a7178"/><rect x="350.18" y="398.4" width="0.8" height="2" fill="#6a7178"/><rect x="361.40" y="396.6" width="0.9" height="4.2" fill="#7f868c"/><rect x="372.62" y="398.4" width="0.8" height="2" fill="#6a7178"/><rect x="383.84" y="398.4" width="0.8" height="2" fill="#6a7178"/><rect x="395.06" y="398.4" width="0.8" height="2" fill="#6a7178"/><rect x="406.28" y="398.4" width="0.8" height="2" fill="#6a7178"/><rect x="417.50" y="396.6" width="0.9" height="4.2" fill="#7f868c"/><rect x="428.72" y="398.4" width="0.8" height="2" fill="#6a7178"/><rect x="439.94" y="398.4" width="0.8" height="2" fill="#6a7178"/><rect x="451.16" y="398.4" width="0.8" height="2" fill="#6a7178"/><rect x="462.38" y="398.4" width="0.8" height="2" fill="#6a7178"/><rect x="473.60" y="396.6" width="0.9" height="4.2" fill="#7f868c"/><rect x="484.82" y="398.4" width="0.8" height="2" fill="#6a7178"/><rect x="496.04" y="398.4" width="0.8" height="2" fill="#6a7178"/><rect x="507.26" y="398.4" width="0.8" height="2" fill="#6a7178"/><rect x="518.48" y="398.4" width="0.8" height="2" fill="#6a7178"/><rect x="529.70" y="396.6" width="0.9" height="4.2" fill="#7f868c"/><rect x="540.92" y="398.4" width="0.8" height="2" fill="#6a7178"/><rect x="552.14" y="398.4" width="0.8" height="2" fill="#6a7178"/><rect x="563.36" y="398.4" width="0.8" height="2" fill="#6a7178"/><rect x="574.58" y="398.4" width="0.8" height="2" fill="#6a7178"/><rect x="585.80" y="396.6" width="0.9" height="4.2" fill="#7f868c"/><rect x="597.02" y="398.4" width="0.8" height="2" fill="#6a7178"/><rect x="608.24" y="398.4" width="0.8" height="2" fill="#6a7178"/><rect x="619.46" y="398.4" width="0.8" height="2" fill="#6a7178"/><rect x="630.68" y="398.4" width="0.8" height="2" fill="#6a7178"/><rect x="641.90" y="396.6" width="0.9" height="4.2" fill="#7f868c"/><rect x="653.12" y="398.4" width="0.8" height="2" fill="#6a7178"/><rect x="664.34" y="398.4" width="0.8" height="2" fill="#6a7178"/><rect x="675.56" y="398.4" width="0.8" height="2" fill="#6a7178"/><rect x="686.78" y="398.4" width="0.8" height="2" fill="#6a7178"/><rect x="698.00" y="396.6" width="0.9" height="4.2" fill="#7f868c"/><rect x="709.22" y="398.4" width="0.8" height="2" fill="#6a7178"/><rect x="720.44" y="398.4" width="0.8" height="2" fill="#6a7178"/><rect x="731.66" y="398.4" width="0.8" height="2" fill="#6a7178"/></svg>
<div class="abs" style="left:381px;top:401px;width:136.5px;height:1.5px;background:#e8605a;"></div>
<svg class="ic" width="1024" height="683" viewBox="0 0 1024 683" style="left:0;top:0;stroke-width:0.85;stroke:#c9cdd0"><g transform="translate(200,450.4)"><rect x="-2.4" y="-0.6" width="4.8" height="3.4" rx="0.8"/><path d="M-1.6,-0.6v-1.2a1.4,1.4 0 0 1 2.6,-0.6"/></g><g transform="translate(213,450.4)"><path d="M-3,-1.2h1.4l2,-1.8v6l-2,-1.8h-1.4Z"/><path d="M1.8,-1.4a2,2 0 0 1 0,2.8"/></g><g transform="translate(226.8,450.4)"><path d="M-3.4,0c1.6,-2.8 5.2,-2.8 6.8,0c-1.6,2.8 -5.2,2.8 -6.8,0Z"/><circle r="1" fill="#d5d9dc"/></g><g transform="translate(240,450.4)"><path d="M-2.6,-2.6l3,2.2 2.4,3 -1.4,0.4 -2.4,-3Z"/><path d="M-3,0.4l1,0.8M0.4,-3l0.8,1"/></g><g transform="translate(200,484)"><rect x="-2.4" y="-0.6" width="4.8" height="3.4" rx="0.8"/><path d="M-1.6,-0.6v-1.2a1.4,1.4 0 0 1 2.6,-0.6"/></g><g transform="translate(213,484)"><path d="M-3,-1.2h1.4l2,-1.8v6l-2,-1.8h-1.4Z"/><path d="M1.8,-1.4a2,2 0 0 1 0,2.8"/></g><g transform="translate(226.8,484)"><path d="M-3.4,0c1.6,-2.8 5.2,-2.8 6.8,0c-1.6,2.8 -5.2,2.8 -6.8,0Z"/><circle r="1" fill="#d5d9dc"/></g><g transform="translate(240,484)"><path d="M-2.6,-2.6l3,2.2 2.4,3 -1.4,0.4 -2.4,-3Z"/><path d="M-3,0.4l1,0.8M0.4,-3l0.8,1"/></g><g transform="translate(200,515.8)"><rect x="-2.4" y="-0.6" width="4.8" height="3.4" rx="0.8"/><path d="M-1.6,-0.6v-1.2a1.4,1.4 0 0 1 2.6,-0.6"/></g><g transform="translate(213,515.8)"><path d="M-3,-1.2h1.4l2,-1.8v6l-2,-1.8h-1.4Z"/><path d="M1.8,-1.4a2,2 0 0 1 0,2.8"/></g><g transform="translate(226.8,515.8)"><path d="M-2.6,-2.6l3,2.2 2.4,3 -1.4,0.4 -2.4,-3Z"/><path d="M-3,0.4l1,0.8M0.4,-3l0.8,1"/></g></svg>
<div class="t" style="left:197.8px;top:471.4px;font-size:5.8px;color:#a9afb4;letter-spacing:-0.15px">Video 1</div>
<div class="t" style="left:197.8px;top:503.4px;font-size:5.8px;color:#a9afb4;letter-spacing:-0.15px">Audio 1</div>
<div class="abs" style="left:381.5px;top:443px;width:135px;height:15px;background:#c9a24b;border-radius:3.5px;border:1px solid #f3f5f6;box-shadow:0 0 0 0.6px #11151a"></div>
<div class="abs" style="left:386.6px;top:446.6px;width:7.4px;height:7.4px;background:#f2e9d2;border-radius:1.6px"></div>
<svg width="8" height="8" viewBox="-4 -4 8 8" style="left:386.3px;top:446.3px"><path d="M0,-2.4l0.7,1.7 1.7,0.7 -1.7,0.7 -0.7,1.7 -0.7,-1.7 -1.7,-0.7 1.7,-0.7Z" fill="#b98a2a"/></svg>
<div class="t" style="left:396.5px;top:447.9px;font-size:6.6px;color:#fff8e8;letter-spacing:-0.15px">RGB Stroke</div>
<svg width="1024" height="683" viewBox="0 0 1024 683" style="left:0;top:0"><defs><clipPath id="c1"><rect x="249" y="460.4" width="57" height="37" rx="2.5"/></clipPath><clipPath id="c2"><rect x="308.6" y="460.4" width="428" height="37" rx="2.5"/></clipPath><linearGradient id="k1" x1="0" x2="0" y1="0" y2="1"><stop offset="0" stop-color="#9fc4e6"/><stop offset="1" stop-color="#6f8ea6"/></linearGradient></defs><g clip-path="url(#c1)"><rect x="249" y="460" width="57" height="24" fill="url(#k1)"/><path d="M249,470c10,-6 22,-7 32,0v14h-32Z" fill="#5d6f7c"/><rect x="289" y="460" width="17" height="24" fill="#a9cdee"/><path d="M289,478c6,-4 12,-5 17,-2v8h-17Z" fill="#6c7f8c"/><path d="M292,466l8,3 6,-2v3l-8,1Z" fill="#f4f7fa"/><rect x="249" y="483.5" width="57" height="14" fill="#0f3f39"/><rect x="249" y="487" width="57" height="0.8" fill="#3fc9a8" opacity=".7"/></g><g clip-path="url(#c2)"><rect x="308" y="460" width="430" height="24" fill="#050505"/><rect x="308.8" y="460" width="33.19999999999999" height="24" fill="#ef8c92"/><path d="M321.4,484c-1,-8 0,-12 3,-14c-3,-4 0,-9 3,-8c4,0 5,5 3,8c3,2 5,7 4,14Z" fill="#c8502e"/><path d="M324.4,484c0,-5 1,-8 3,-9c2,1 3,4 3,9Z" fill="#f1c7a8"/><rect x="308.8" y="469.4" width="33.19999999999999" height="3.2" fill="#7a544c" opacity=".75"/><rect x="348" y="460" width="33.5" height="24" fill="#ef8c92"/><path d="M360.75,484c-1,-8 0,-12 3,-14c-3,-4 0,-9 3,-8c4,0 5,5 3,8c3,2 5,7 4,14Z" fill="#c8502e"/><path d="M363.75,484c0,-5 1,-8 3,-9c2,1 3,4 3,9Z" fill="#f1c7a8"/><rect x="348" y="469.4" width="33.5" height="3.2" fill="#7a544c" opacity=".75"/><rect x="389.8" y="460" width="29.19999999999999" height="24" fill="#121010"/><path d="M397.4,484c0,-6 3,-9 6,-10c-2,-3 -1,-8 2,-8c3,0 5,4 3,8c3,1 6,5 6,10Z" fill="#b98768"/><path d="M402.4,468c1,-4 6,-4 6,0c-2,-1 -4,-1 -6,0Z" fill="#2a1a12"/><rect x="427" y="460" width="33.5" height="24" fill="#d9e0e6"/><path d="M439.75,483c-1,-6 1,-9 3,-10c0,-3 0,-6 2,-8c2,1 2,4 2,7c2,2 3,6 3,11Z" fill="#15171a"/><circle cx="444.75" cy="464.5" r="1.6" fill="#e2c3a0"/><rect x="468.5" y="460" width="29.5" height="24" fill="#5a4436"/><path d="M475.25,484c0,-6 4,-9 7,-10c-3,-4 -1,-10 3,-10c4,0 6,5 3,10c3,1 6,5 6,10Z" fill="#d9a98a"/><path d="M480.25,470c-3,-5 0,-9 4,-9c4,0 7,4 5,10c-1,-5 -5,-7 -9,-1Z" fill="#2b1a12"/><rect x="508.7" y="460" width="29.30000000000001" height="24" fill="#c9b09a"/><path d="M514.35,484c-2,-10 2,-20 9,-21c8,0 12,10 10,21Z" fill="#3a2418"/><ellipse cx="524.35" cy="471" rx="3.4" ry="4.6" fill="#e4bfa2"/><path d="M519.35,484c1,-4 3,-6 5,-6c2,0 4,2 5,6Z" fill="#e4bfa2"/><rect x="548" y="460" width="29" height="24" fill="#ead9c0"/><path d="M557.5,484c0,-6 1,-10 4,-12c3,1 6,5 6,12Z" fill="#f0cdb0"/><path d="M558.5,470c-2,-5 2,-8 5,-7c3,1 4,5 2,8c-2,-3 -5,-3 -7,-1Z" fill="#d0552c"/><circle cx="561.5" cy="474" r="1" fill="#2a5fd0"/><rect x="548" y="469.6" width="29" height="3.4" fill="#8a8378" opacity=".8"/><rect x="587.4" y="460" width="29.600000000000023" height="24" fill="#ead9c0"/><path d="M597.2,484c0,-6 1,-10 4,-12c3,1 6,5 6,12Z" fill="#f0cdb0"/><path d="M598.2,470c-2,-5 2,-8 5,-7c3,1 4,5 2,8c-2,-3 -5,-3 -7,-1Z" fill="#d0552c"/><circle cx="601.2" cy="474" r="1" fill="#2a5fd0"/><rect x="587.4" y="469.6" width="29.600000000000023" height="3.4" fill="#8a8378" opacity=".8"/><rect x="624.8" y="460" width="33.200000000000045" height="24" fill="#e9e2dc"/><path d="M634.4,484c-1,-9 1,-18 6,-20c6,0 9,10 8,20Z" fill="#d8341c"/><path d="M638.4,484c0,-4 1,-7 3,-8c2,1 4,4 4,8Z" fill="#2a2a2a"/><ellipse cx="641.4" cy="470" rx="2.2" ry="3" fill="#f0cdb0"/><circle cx="638.4" cy="480" r="1.2" fill="#2aa84a"/><rect x="624.8" y="469.6" width="33.200000000000045" height="3.4" fill="#8a8378" opacity=".7"/><rect x="664.5" y="460" width="33.5" height="24" fill="#c3c6c4"/><rect x="664.5" y="460" width="10" height="16" fill="#55605f"/><rect x="688" y="460" width="10" height="14" fill="#e6e6e2"/><rect x="664.5" y="476" width="33.5" height="8" fill="#9aa09e"/><path d="M683.25,484c-1,-6 -1,-10 1,-14c2,0 4,2 4,6c0,3 -1,6 -1,8Z" fill="#3f6fa8"/><path d="M683.25,472c0,-2 1,-4 3,-4c2,1 2,3 2,5Z" fill="#f2c230"/><circle cx="686.25" cy="465.6" r="1.6" fill="#c98a5a"/><rect x="704" y="460" width="33" height="24" fill="#ece6e0"/><path d="M707,480c2,-5 8,-8 14,-6c5,1 10,2 14,6v4h-28Z" fill="#fbfbfb"/><ellipse cx="714" cy="471" rx="3.6" ry="3" fill="#e4bfa2"/><path d="M710,470c0,-4 5,-6 9,-3c-3,0 -6,1 -9,3Z" fill="#2a1c16"/><path d="M718,476c4,-1 9,0 13,3" stroke="#d89a7a" stroke-width="1.4" fill="none"/><rect x="308" y="483.5" width="430" height="14" fill="#3fbf9f"/><rect x="308" y="483.2" width="430" height="4.6" fill="#1d3533"/><path d="M308.6,487.6 L308.6,485.4 L309.9,484.8 L311.2,486.4 L312.5,486.2 L313.8,486.6 L315.1,486.0 L316.4,486.4 L317.7,486.4 L319.0,486.8 L320.3,486.2 L321.6,485.2 L322.9,484.8 L324.2,486.8 L325.5,485.4 L326.8,485.2 L328.1,485.2 L329.4,484.2 L330.7,484.8 L332.0,486.0 L333.3,486.4 L334.6,484.8 L335.9,485.4 L337.2,486.8 L338.5,485.8 L339.8,484.8 L341.1,484.8 L342.4,485.4 L343.7,486.0 L345.0,484.8 L346.3,484.8 L347.6,485.8 L348.9,484.2 L350.2,486.4 L351.5,483.8 L352.8,484.2 L354.1,485.8 L355.4,486.2 L356.7,485.2 L358.0,485.4 L359.3,486.0 L360.6,485.4 L361.9,486.6 L363.2,484.8 L364.5,486.4 L365.8,485.2 L367.1,484.8 L368.4,486.8 L369.7,484.8 L371.0,483.8 L372.3,484.8 L373.6,485.2 L374.9,485.4 L376.2,486.2 L377.5,486.2 L378.8,483.8 L380.1,484.8 L381.4,486.2 L382.7,486.6 L384.0,486.0 L385.3,485.4 L386.6,484.8 L387.9,484.8 L389.2,486.8 L390.5,486.4 L391.8,486.8 L393.1,486.6 L394.4,485.8 L395.7,484.8 L397.0,485.2 L398.3,485.2 L399.6,485.8 L400.9,486.6 L402.2,484.2 L403.5,486.0 L404.8,485.8 L406.1,485.4 L407.4,486.4 L408.7,486.2 L410.0,485.4 L411.3,485.8 L412.6,485.8 L413.9,486.6 L415.2,484.8 L416.5,486.0 L417.8,484.2 L419.1,486.2 L420.4,483.8 L421.7,484.2 L423.0,485.8 L424.3,485.2 L425.6,485.4 L426.9,484.2 L428.2,486.4 L429.5,486.8 L430.8,485.4 L432.1,484.8 L433.4,483.8 L434.7,483.8 L436.0,485.4 L437.3,486.4 L438.6,484.2 L439.9,486.0 L441.2,484.8 L442.5,486.6 L443.8,486.8 L445.1,486.8 L446.4,484.2 L447.7,486.4 L449.0,484.8 L450.3,485.8 L451.6,484.2 L452.9,486.8 L454.2,484.2 L455.5,484.8 L456.8,484.2 L458.1,486.0 L459.4,485.8 L460.7,486.2 L462.0,483.8 L463.3,485.8 L464.6,486.4 L465.9,484.8 L467.2,483.8 L468.5,485.4 L469.8,486.6 L471.1,484.8 L472.4,486.0 L473.7,484.8 L475.0,486.2 L476.3,483.8 L477.6,486.0 L478.9,484.2 L480.2,483.8 L481.5,486.8 L482.8,484.2 L484.1,486.8 L485.4,486.6 L486.7,486.0 L488.0,484.2 L489.3,484.2 L490.6,484.8 L491.9,483.8 L493.2,486.4 L494.5,486.6 L495.8,485.4 L497.1,486.2 L498.4,485.4 L499.7,486.4 L501.0,486.8 L502.3,486.8 L503.6,486.8 L504.9,486.0 L506.2,483.8 L507.5,485.8 L508.8,486.0 L510.1,483.8 L511.4,486.8 L512.7,485.2 L514.0,486.6 L515.3,483.8 L516.6,485.4 L517.9,484.2 L519.2,486.8 L520.5,486.4 L521.8,485.2 L523.1,484.8 L524.4,486.2 L525.7,485.8 L527.0,485.4 L528.3,486.6 L529.6,485.4 L530.9,485.4 L532.2,486.6 L533.5,486.2 L534.8,486.6 L536.1,486.8 L537.4,485.4 L538.7,486.2 L540.0,486.6 L541.3,485.4 L542.6,485.8 L543.9,486.2 L545.2,485.4 L546.5,486.6 L547.8,485.4 L549.1,486.8 L550.4,486.8 L551.7,484.8 L553.0,484.8 L554.3,485.4 L555.6,485.2 L556.9,485.4 L558.2,485.4 L559.5,486.2 L560.8,484.8 L562.1,486.0 L563.4,484.2 L564.7,486.8 L566.0,484.2 L567.3,483.8 L568.6,486.4 L569.9,483.8 L571.2,486.2 L572.5,485.8 L573.8,485.8 L575.1,486.8 L576.4,486.6 L577.7,486.2 L579.0,486.4 L580.3,486.2 L581.6,485.4 L582.9,483.8 L584.2,486.0 L585.5,484.2 L586.8,484.8 L588.1,485.8 L589.4,486.6 L590.7,485.8 L592.0,484.2 L593.3,486.2 L594.6,485.2 L595.9,485.4 L597.2,485.8 L598.5,485.8 L599.8,484.8 L601.1,484.2 L602.4,486.2 L603.7,486.6 L605.0,486.4 L606.3,484.8 L607.6,485.8 L608.9,485.8 L610.2,485.4 L611.5,486.8 L612.8,486.2 L614.1,483.8 L615.4,486.0 L616.7,484.8 L618.0,485.8 L619.3,486.8 L620.6,486.0 L621.9,485.8 L623.2,486.6 L624.5,483.8 L625.8,486.6 L627.1,486.2 L628.4,486.2 L629.7,485.4 L631.0,486.8 L632.3,485.4 L633.6,486.0 L634.9,486.8 L636.2,483.8 L637.5,484.8 L638.8,486.4 L640.1,486.2 L641.4,486.2 L642.7,485.4 L644.0,485.2 L645.3,486.8 L646.6,485.4 L647.9,486.0 L649.2,485.8 L650.5,483.8 L651.8,484.2 L653.1,485.2 L654.4,486.6 L655.7,485.2 L657.0,486.6 L658.3,486.8 L659.6,486.4 L660.9,486.8 L662.2,483.8 L663.5,486.4 L664.8,486.6 L666.1,485.2 L667.4,484.8 L668.7,483.8 L670.0,486.0 L671.3,486.8 L672.6,484.2 L673.9,486.4 L675.2,485.2 L676.5,486.8 L677.8,484.8 L679.1,484.2 L680.4,486.4 L681.7,486.4 L683.0,485.2 L684.3,486.6 L685.6,486.2 L686.9,485.4 L688.2,484.8 L689.5,486.2 L690.8,485.4 L692.1,486.6 L693.4,486.2 L694.7,486.4 L696.0,486.4 L697.3,486.4 L698.6,483.8 L699.9,484.2 L701.2,485.2 L702.5,486.2 L703.8,486.2 L705.1,486.6 L706.4,486.4 L707.7,485.8 L709.0,485.4 L710.3,485.8 L711.6,484.8 L712.9,486.6 L714.2,486.2 L715.5,486.4 L716.8,485.2 L718.1,486.0 L719.4,484.2 L720.7,486.0 L722.0,486.0 L723.3,486.0 L724.6,484.2 L725.9,486.6 L727.2,484.2 L728.5,484.8 L729.8,485.2 L731.1,486.8 L732.4,486.0 L733.7,486.8 L735.0,485.8 L736.3,484.8 L737,487.6Z" fill="#d3dc86"/><path d="M308.6,487.8 L308.6,487.6 L310.3,487.4 L312.0,487.6 L313.7,486.6 L315.4,486.3 L317.1,487.5 L318.8,487.4 L320.5,486.6 L322.2,487.4 L323.9,487.6 L325.6,487.4 L327.3,487.3 L329.0,486.6 L330.7,486.3 L332.4,487.0 L334.1,487.0 L335.8,487.3 L337.5,486.3 L339.2,487.3 L340.9,486.3 L342.6,487.5 L344.3,487.6 L346.0,487.5 L347.7,487.6 L349.4,487.4 L351.1,487.0 L352.8,487.4 L354.5,486.6 L356.2,486.3 L357.9,487.4 L359.6,487.0 L361.3,486.3 L363.0,487.4 L364.7,486.3 L366.4,486.6 L368.1,487.4 L369.8,487.4 L371.5,486.6 L373.2,486.6 L374.9,487.3 L376.6,487.0 L378.3,486.3 L380.0,487.4 L381.7,487.0 L383.4,487.5 L385.1,487.0 L386.8,487.3 L388.5,486.6 L390.2,487.6 L391.9,487.4 L393.6,487.3 L395.3,487.5 L397.0,486.3 L398.7,487.4 L400.4,487.3 L402.1,487.0 L403.8,487.0 L405.5,487.3 L407.2,487.4 L408.9,486.3 L410.6,487.0 L412.3,487.5 L414.0,487.4 L415.7,487.6 L417.4,487.6 L419.1,486.6 L420.8,487.5 L422.5,487.3 L424.2,487.0 L425.9,487.5 L427.6,487.0 L429.3,487.0 L431.0,487.3 L432.7,487.0 L434.4,487.6 L436.1,487.4 L437.8,487.6 L439.5,487.4 L441.2,486.3 L442.9,486.3 L444.6,487.6 L446.3,486.3 L448.0,487.0 L449.7,486.3 L451.4,486.3 L453.1,487.6 L454.8,487.3 L456.5,487.3 L458.2,487.4 L459.9,486.6 L461.6,487.5 L463.3,487.4 L465.0,487.6 L466.7,486.3 L468.4,487.6 L470.1,487.3 L471.8,487.5 L473.5,486.6 L475.2,487.5 L476.9,487.5 L478.6,487.3 L480.3,487.4 L482.0,486.3 L483.7,486.3 L485.4,487.5 L487.1,487.0 L488.8,486.3 L490.5,487.5 L492.2,486.6 L493.9,487.4 L495.6,487.3 L497.3,486.6 L499.0,487.5 L500.7,487.3 L502.4,487.0 L504.1,487.0 L505.8,487.3 L507.5,487.5 L509.2,487.0 L510.9,487.4 L512.6,487.5 L514.3,487.4 L516.0,486.6 L517.7,486.3 L519.4,486.6 L521.1,487.4 L522.8,486.6 L524.5,486.3 L526.2,487.0 L527.9,487.0 L529.6,486.6 L531.3,486.6 L533.0,487.4 L534.7,487.6 L536.4,487.0 L538.1,487.3 L539.8,487.4 L541.5,486.6 L543.2,487.5 L544.9,487.4 L546.6,487.4 L548.3,486.3 L550.0,487.0 L551.7,486.6 L553.4,486.6 L555.1,487.4 L556.8,487.6 L558.5,487.3 L560.2,487.4 L561.9,487.6 L563.6,486.6 L565.3,487.5 L567.0,487.0 L568.7,487.4 L570.4,486.3 L572.1,487.0 L573.8,487.6 L575.5,486.3 L577.2,487.0 L578.9,486.6 L580.6,487.3 L582.3,487.5 L584.0,486.6 L585.7,487.4 L587.4,486.3 L589.1,487.6 L590.8,487.3 L592.5,487.3 L594.2,487.6 L595.9,487.0 L597.6,487.3 L599.3,487.6 L601.0,487.3 L602.7,486.6 L604.4,486.3 L606.1,487.4 L607.8,487.5 L609.5,487.4 L611.2,487.4 L612.9,487.5 L614.6,487.4 L616.3,487.0 L618.0,487.6 L619.7,487.4 L621.4,487.3 L623.1,487.3 L624.8,486.3 L626.5,487.6 L628.2,487.3 L629.9,487.6 L631.6,487.0 L633.3,487.6 L635.0,487.6 L636.7,487.0 L638.4,487.6 L640.1,487.5 L641.8,487.0 L643.5,487.4 L645.2,487.5 L646.9,487.5 L648.6,487.3 L650.3,487.5 L652.0,487.3 L653.7,487.5 L655.4,486.6 L657.1,487.3 L658.8,487.5 L660.5,487.5 L662.2,487.6 L663.9,487.4 L665.6,487.0 L667.3,487.5 L669.0,487.6 L670.7,487.5 L672.4,487.4 L674.1,487.3 L675.8,487.4 L677.5,486.6 L679.2,487.3 L680.9,487.3 L682.6,486.3 L684.3,487.0 L686.0,486.6 L687.7,487.4 L689.4,487.6 L691.1,486.6 L692.8,487.3 L694.5,487.3 L696.2,486.3 L697.9,487.0 L699.6,487.4 L701.3,486.6 L703.0,487.4 L704.7,487.5 L706.4,487.0 L708.1,486.3 L709.8,486.6 L711.5,487.0 L713.2,487.3 L714.9,486.6 L716.6,487.6 L718.3,486.6 L720.0,487.6 L721.7,487.0 L723.4,487.5 L725.1,487.6 L726.8,487.0 L728.5,486.3 L730.2,487.3 L731.9,487.6 L733.6,487.3 L735.3,487.6 L737,487.8Z" fill="#3fbf9f"/><rect x="365" y="487" width="0.8" height="2.4" fill="#14524a"/><rect x="418" y="487" width="0.8" height="2" fill="#14524a"/><rect x="493" y="487" width="0.8" height="2" fill="#14524a"/><rect x="527" y="487" width="0.8" height="2" fill="#14524a"/><rect x="560" y="487" width="0.8" height="2.4" fill="#14524a"/><rect x="592" y="487" width="0.8" height="2" fill="#14524a"/><rect x="640" y="487" width="0.8" height="3" fill="#14524a"/><rect x="700" y="487" width="0.8" height="2.4" fill="#14524a"/></g></svg>
<div class="abs" style="left:252px;top:467.8px;width:6.4px;height:6.4px;background:rgba(255,255,255,.75);border-radius:1.4px"></div>
<svg width="6" height="6" viewBox="-3 -3 6 6" style="left:252.2px;top:468px"><path d="M-1,-1.6 1.6,0 -1,1.6Z" fill="#5a6a78"/></svg>
<div class="t" style="left:260px;top:467.6px;font-size:6.6px;color:#f3f5f6;letter-spacing:-0.1px;text-shadow:0 0 1px #333">user guide</div>
<div class="abs" style="left:311.8px;top:467.8px;width:6.4px;height:6.4px;background:#ffffff;border-radius:1.4px"></div>
<svg width="6" height="6" viewBox="-3 -3 6 6" style="left:312px;top:468px"><path d="M-1,-1.6 1.6,0 -1,1.6Z" fill="#e0705a"/></svg>
<div class="t" style="left:321px;top:467.6px;font-size:6.6px;color:#ffffff;letter-spacing:-0.1px;text-shadow:0 0 1px #633">New project</div>
<div class="abs" style="left:736.4px;top:402.5px;width:5.2px;height:160px;background:#3d444b;border-radius:3px"></div>
<div class="abs" style="left:435.4px;top:389px;width:1.5px;height:140px;background:#ef6a60;"></div>
<svg width="10" height="10" viewBox="-5 -5 10 10" style="left:431.1px;top:383.8px"><path d="M-3,-2.4a1,1 0 0 1 1,-1h4a1,1 0 0 1 1,1v2.8l-3,3 -3,-3Z" fill="#f26d62"/></svg>
<div class="abs" style="left:430px;top:422.4px;width:12.4px;height:18.6px;background:#f26d62;border-radius:6.2px"></div>
<svg width="10" height="10" viewBox="-5 -5 10 10" style="left:431.2px;top:426.7px" fill="none" stroke="#fff" stroke-width="0.8" stroke-linecap="round"><circle cx="-1.6" cy="2.4" r="1"/><circle cx="1.6" cy="2.4" r="1"/><path d="M-1.1,1.5 1.4,-3.4M1.1,1.5 -1.4,-3.4"/></svg>
<div class="abs" style="left:99.5px;top:528.5px;width:368.5px;height:84.5px;background:#ffffff;border-radius:9px;box-shadow:0 3px 10px rgba(0,0,0,.14),0 0 3px rgba(0,0,0,.05)"></div>
<div class="abs" id="cap" style="left:160.8px;top:556px;font-family:'DejaVu Sans Condensed','DejaVu Sans','Liberation Sans',sans-serif;font-size:22.8px;line-height:28px;color:#444444;white-space:nowrap;letter-spacing:0.78px"><span id="capt">Apply cinematic filters</span></div>
<div class="abs" style="left:0px;top:656.6px;width:1024px;height:27px;background:linear-gradient(90deg,#dfe9fa 0%,#e4ecf9 30%,#eef2fa 55%,#e8eef9 75%,#e1e9f8 100%);"></div>
<svg width="1024" height="683" viewBox="0 0 1024 683" style="left:0;top:0"><g transform="translate(419,669.5)"><rect x="-5.8" y="-5.8" width="5.4" height="5.4" rx="0.5" fill="#45bcf0"/><rect x="0.4" y="-5.8" width="5.4" height="5.4" rx="0.5" fill="#1f9fe9"/><rect x="-5.8" y="0.4" width="5.4" height="5.4" rx="0.5" fill="#1b92e2"/><rect x="0.4" y="0.4" width="5.4" height="5.4" rx="0.5" fill="#0a72d3"/></g><g transform="translate(441.6,669.5)"><path d="M-5.6,-4.6h4l1.4,1.4h5.8v7.6h-11.2Z" fill="#f7b928"/><rect x="-5.6" y="-1.4" width="11.2" height="5.8" rx="0.6" fill="#fdd45a"/><rect x="-2.4" y="2.6" width="4.8" height="1.8" fill="#3a8ee6"/></g><g transform="translate(465,669.5)"><path d="M-5.8,-3h2.6l1,-1.6h4.4l1,1.6h2.6v7.6h-11.6Z" fill="#6f7b88"/><circle cx="0" cy="0.8" r="2.6" fill="#dfe5ea"/><circle cx="0" cy="0.8" r="1.5" fill="#55606c"/></g><g transform="translate(488.8,669.5)"><circle r="5.6" fill="#1573c7"/><path d="M-5.4,1.4a5.6,5.6 0 0 1 10.8,-2.8c-2,-2.4 -7,-2.4 -7.4,1.8c0,3 3,4.6 6,3.4a5.6,5.6 0 0 1 -9.4,-2.4Z" fill="#35c1a8"/><circle cx="0.6" cy="0.6" r="2.2" fill="#e9eef7"/></g><g transform="translate(512,669.5)"><rect x="-5.4" y="-3" width="10.8" height="8" rx="1" fill="#1f4fa8"/><path d="M-2.2,-3v-1.4a2.2,2.2 0 0 1 4.4,0v1.4" fill="none" stroke="#1f4fa8" stroke-width="1.1"/><rect x="-2.8" y="-1.2" width="2.4" height="2.4" fill="#f25022"/><rect x="0.4" y="-1.2" width="2.4" height="2.4" fill="#7fba00"/><rect x="-2.8" y="1.8" width="2.4" height="2.4" fill="#00a4ef"/><rect x="0.4" y="1.8" width="2.4" height="2.4" fill="#ffb900"/></g><g transform="translate(535,669.5)"><circle cx="3.2" cy="-3.4" r="1.8" fill="#5059c9"/><rect x="0.8" y="-1.2" width="5.2" height="5.6" rx="1.4" fill="#5059c9"/><circle cx="-1.6" cy="-4" r="2.2" fill="#7b83eb"/><rect x="-5.6" y="-1.6" width="7.4" height="7" rx="1.2" fill="#4b53bc"/><path d="M-3.8,0h3.8M-1.9,0v4" stroke="#fff" stroke-width="1.1" fill="none"/></g><g transform="translate(559,669.5)"><circle r="5.4" fill="#3aa0e8"/><path d="M-5.4,0a5.4,5.4 0 0 1 5.4,-5.4v5.4Z" fill="#8ad04a"/><path d="M0,5.4a5.4,5.4 0 0 1 -5.4,-5.4h5.4Z" fill="#f0b23a"/><circle r="2.2" fill="#f3f6fb"/><path d="M1,-1l4.6,-4.6" stroke="#555" stroke-width="1.2"/></g><g transform="translate(582.5,669.5)"><rect x="-10" y="-9.6" width="20" height="19.6" rx="2.5" fill="#f8fafd" opacity=".85"/><rect x="-6.4" y="-7.4" width="12.8" height="14.4" rx="1.6" fill="#152a52"/><rect x="-2.2" y="-5" width="4.4" height="9.6" rx="0.8" fill="#f3f6fb"/><rect x="-0.8" y="-3.6" width="1.6" height="6.8" fill="#2a6fe0"/></g><g transform="translate(606,669.5)"><circle r="4.4" fill="none" stroke="#55606c" stroke-width="2.2" stroke-dasharray="2.2 1.25"/><circle r="3.4" fill="#6f7b88"/><circle r="1.7" fill="#3a8ee6"/></g></svg>
<div class="abs" style="left:440.1px;top:679.4px;width:3px;height:1.3px;background:#8a94a2;border-radius:1px"></div>
<div class="abs" style="left:487.3px;top:679.4px;width:3px;height:1.3px;background:#8a94a2;border-radius:1px"></div>
<div class="abs" style="left:533.5px;top:679.4px;width:3px;height:1.3px;background:#8a94a2;border-radius:1px"></div>
<div class="abs" style="left:557.5px;top:679.4px;width:3px;height:1.3px;background:#8a94a2;border-radius:1px"></div>
<div class="abs" style="left:604.5px;top:679.4px;width:3px;height:1.3px;background:#8a94a2;border-radius:1px"></div>
<div class="abs" style="left:578.5px;top:679.3px;width:8px;height:1.6px;background:#1a6fd8;border-radius:1px"></div>
<svg width="1024" height="683" viewBox="0 0 1024 683" style="left:0;top:0"><path d="M627.63,667.47 L631.15,663.88 A5.8,5.8 0 0 1 633.84,673.57 L632.49,668.73 L629.7,669.5 Z" fill="#e53a2f" stroke="#e53a2f" stroke-width="0.3"/><path d="M632.49,668.73 L633.84,673.57 A5.8,5.8 0 0 1 624.11,671.05 L628.97,672.31 L629.7,669.5 Z" fill="#fbbc12" stroke="#fbbc12" stroke-width="0.3"/><path d="M628.97,672.31 L624.11,671.05 A5.8,5.8 0 0 1 631.15,663.88 L627.63,667.47 L629.7,669.5 Z" fill="#2e9a48" stroke="#2e9a48" stroke-width="0.3"/><circle cx="629.7" cy="669.5" r="2.90" fill="#ffffff"/><circle cx="629.7" cy="669.5" r="2.32" fill="#1a73e8"/><g fill="none" stroke="#3a424c" stroke-width="1.1" stroke-linecap="round" stroke-linejoin="round"><path d="M943.4,671.8 946.8,668.2 950.2,671.8" stroke-width="1.3"/><rect x="957" y="666.2" width="7.4" height="5.6" rx="0.8" stroke-width="1.1"/><path d="M959.2,673.4h3" stroke-width="1.1"/><rect x="963.4" y="665" width="2.6" height="3.8" rx="0.6" fill="#e9eef7" stroke-width="0.9"/><path d="M970.4,668.6h1.5l2.1,-1.9v6.2l-2.1,-1.9h-1.5Z" stroke-width="1"/><path d="M975.6,668a2.2,2.2 0 0 1 0,3.6M977.2,666.8a4,4 0 0 1 0,6" stroke-width="0.9"/></g></svg>
<div class="t" style="left:1013.4px;top:662.4px;transform:translateX(-100%);font-size:6.1px;color:#1f242b;letter-spacing:-0.05px;-webkit-text-stroke:0.2px #1f242b">11:59 AM</div>
<div class="t" style="left:1013.4px;top:671.3px;transform:translateX(-100%);font-size:6.1px;color:#1f242b;letter-spacing:-0.05px;-webkit-text-stroke:0.2px #1f242b">11/2/2021</div>
</div>
</body>
</html>
